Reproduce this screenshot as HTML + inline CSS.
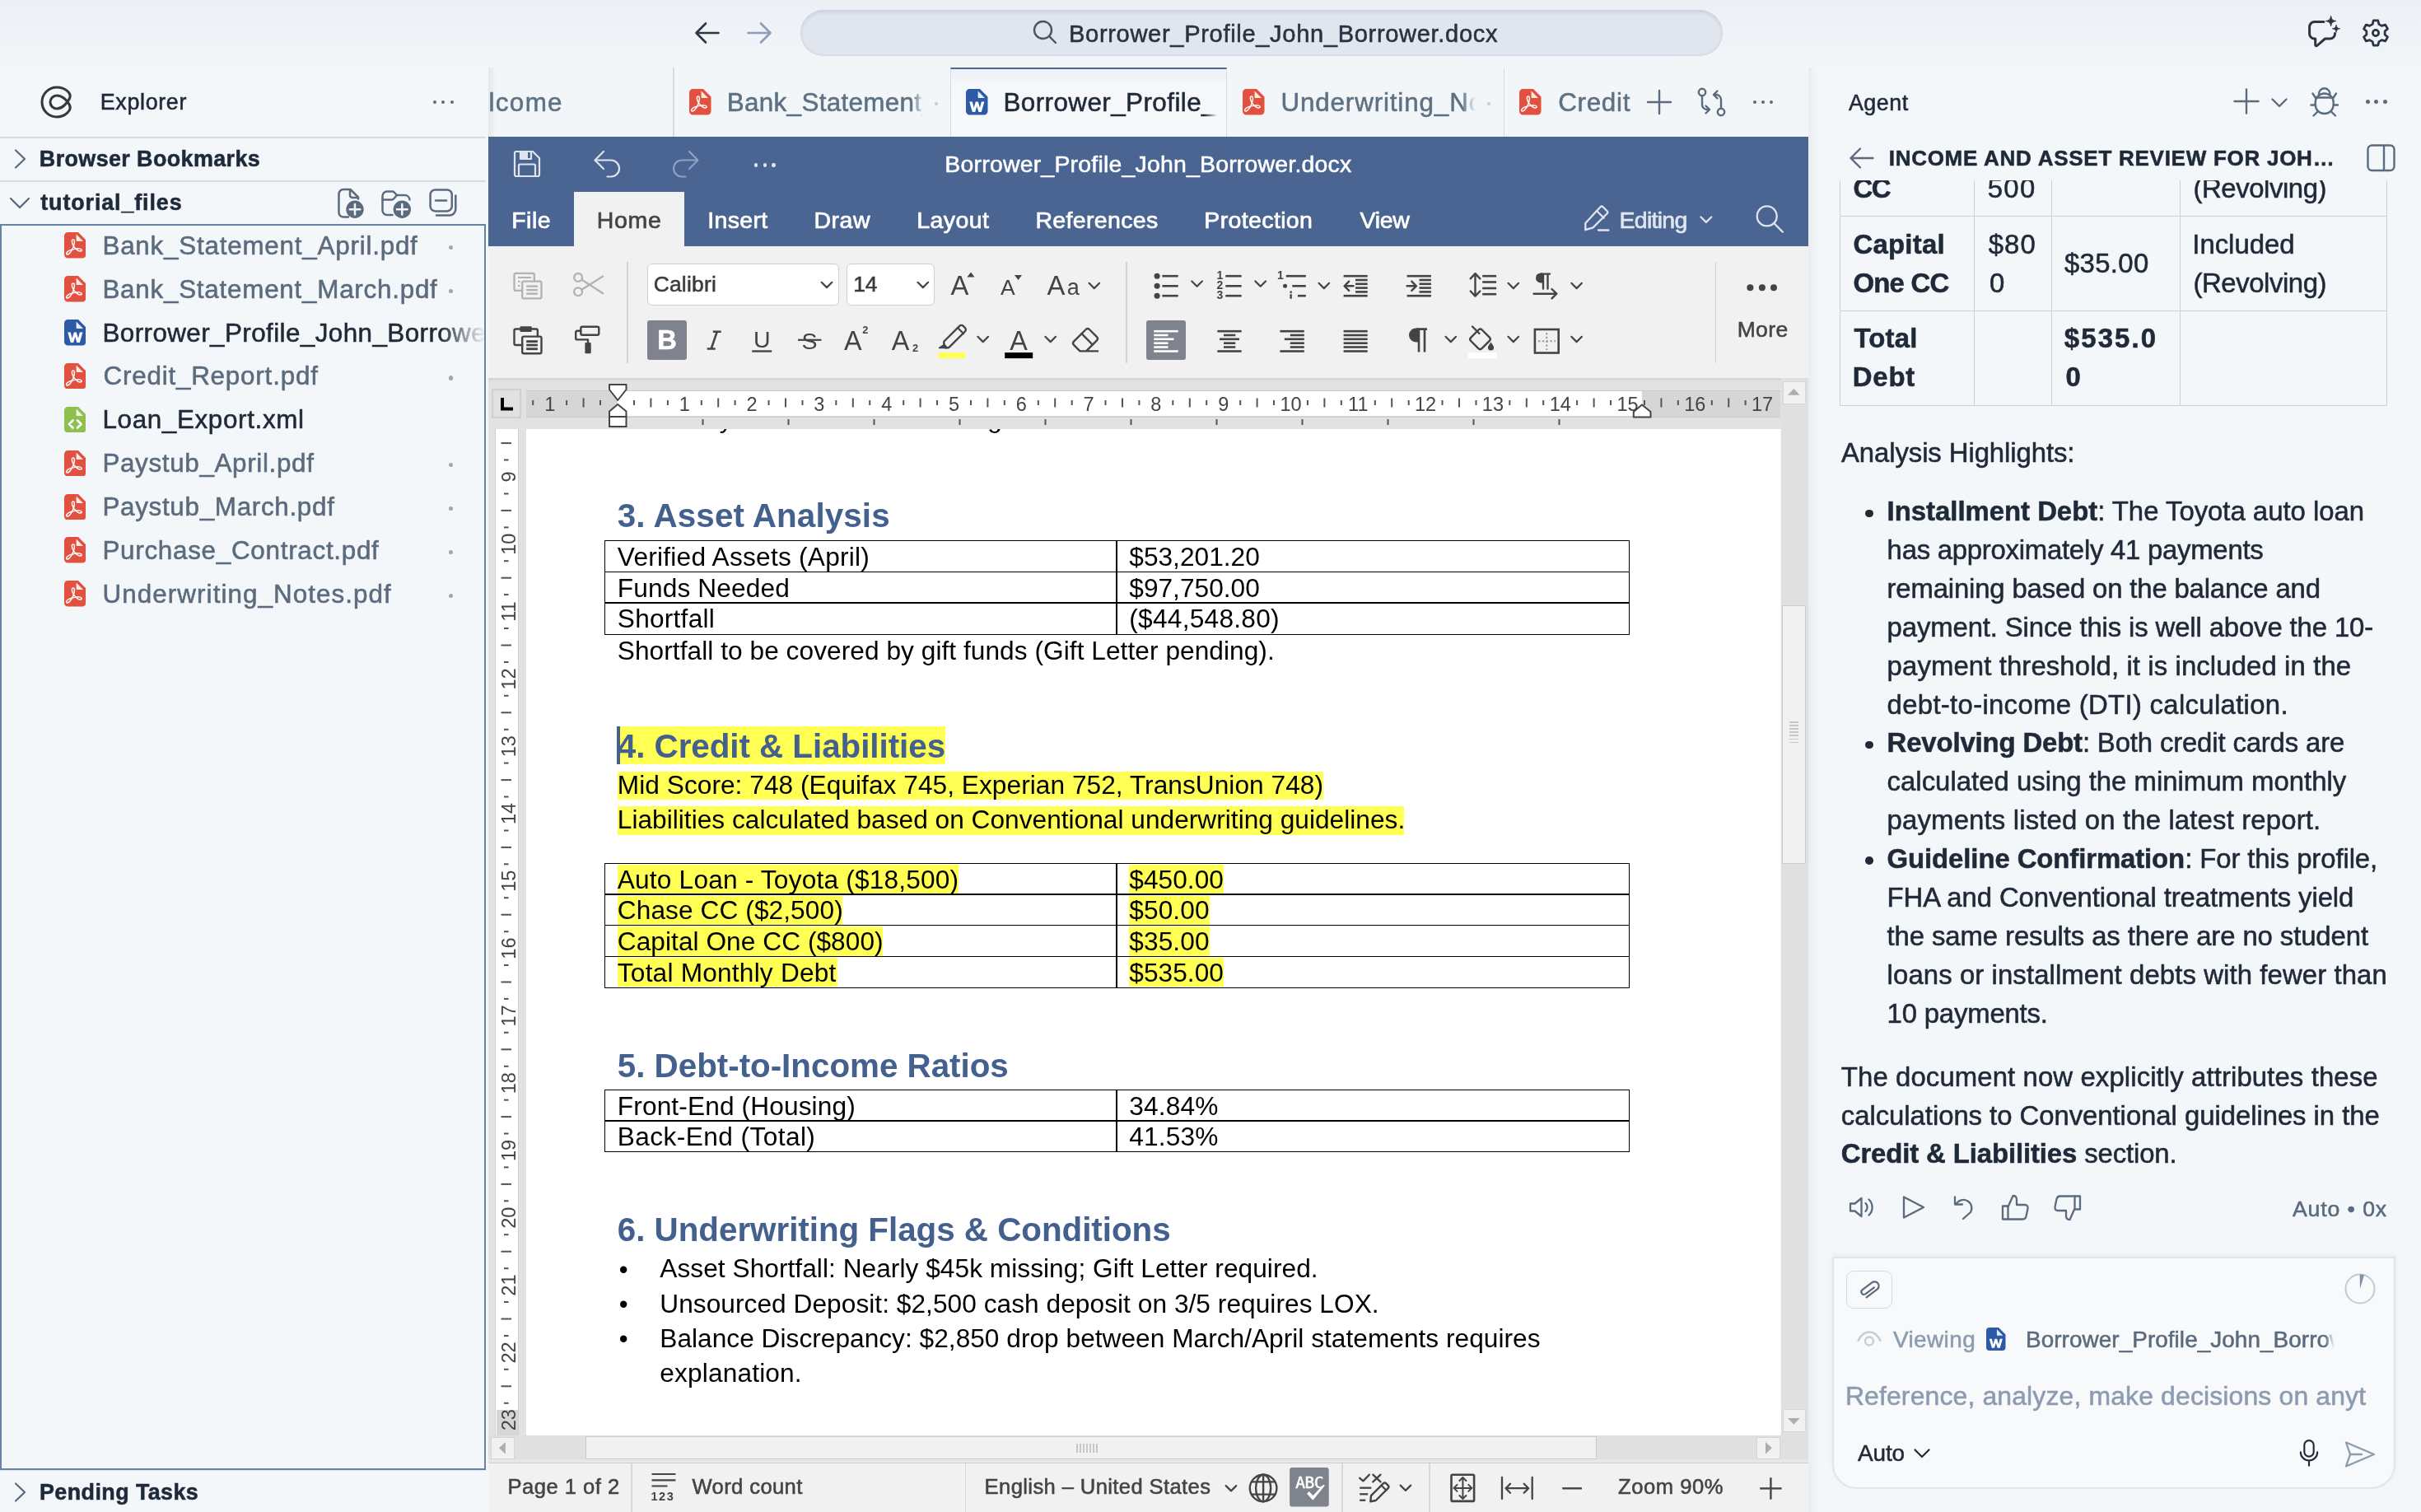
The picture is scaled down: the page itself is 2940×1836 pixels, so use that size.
<!DOCTYPE html><html><head><meta charset="utf-8"><title>Borrower_Profile_John_Borrower.docx</title><style>
html,body{margin:0;padding:0}
body{width:2940px;height:1836px;overflow:hidden;position:relative;background:#f4f7fa;will-change:transform;font-family:"Liberation Sans",sans-serif;}
.a{position:absolute;box-sizing:border-box}
.t{position:absolute;white-space:nowrap;font-family:"Liberation Sans",sans-serif;-webkit-text-stroke:0.55px}
.d{-webkit-text-stroke:0}
</style></head><body>
<div class="a" style="left:0.0px;top:0.0px;width:2940.0px;height:82.0px;background:linear-gradient(#eceff4,#f3f6f9)"></div>
<svg class="a" style="left:842.0px;top:26.0px;" width="34" height="28" viewBox="0 0 34 28" fill="none"><path d="M30.5 14H3.5M15 2.5L3.5 14L15 25.5" stroke="#2b3544" stroke-width="2.6" stroke-linecap="round" stroke-linejoin="round"/></svg>
<svg class="a" style="left:905.0px;top:26.0px;" width="34" height="28" viewBox="0 0 34 28" fill="none"><path d="M3.5 14H30.5M19 2.5L30.5 14L19 25.5" stroke="#8d9db8" stroke-width="2.6" stroke-linecap="round" stroke-linejoin="round"/></svg>
<div class="a" style="left:972.0px;top:12.0px;width:1120.0px;height:56.0px;border-radius:28px;background:#e1e6ee;box-shadow:inset 0 3px 4px rgba(110,125,155,.20),inset 0 -1.500px 2px rgba(110,125,155,.12)"></div>
<svg class="a" style="left:1253.0px;top:23.0px;" width="32" height="32" viewBox="0 0 32 32" fill="none"><circle cx="13.5" cy="13.5" r="10.5" stroke="#4b5563" stroke-width="2.4"/><path d="M21.2 21.2L29 29" stroke="#4b5563" stroke-width="2.4" stroke-linecap="round"/></svg>
<div class="t " style="left:1298.01px;top:22.0px;font-size:29.10px;line-height:38px;color:#283241;letter-spacing:0.661px;">Borrower_Profile_John_Borrower.docx</div>
<svg class="a" style="left:2800.0px;top:14.0px;" width="44" height="46" viewBox="0 0 44 46" fill="none"><path d="M22 12.600H10.600a6 6 0 0 0-6 6V27a6 6 0 0 0 6 6h1.100v7.600a1.200 1.200 0 0 0 2 .9L23.500 33h6a6 6 0 0 0 6-6v-.5" stroke="#2b3544" stroke-width="3" stroke-linejoin="round" stroke-linecap="round"/><path d="M30.600 5.400c.8 4.300 1.900 5.400 6.200 6.200-4.300 .8-5.400 1.900-6.200 6.200-.8-4.300-1.900-5.400-6.200-6.200 4.300-.8 5.400-1.900 6.200-6.200z" fill="#2b3544" stroke="#2b3544" stroke-width="1" stroke-linejoin="round"/><path d="M37 16.200c.6 3.200 1.400 4 4.600 4.600-3.200 .6-4 1.400-4.600 4.600-.6-3.200-1.400-4-4.600-4.600 3.200-.6 4-1.400 4.600-4.600z" fill="#2b3544" stroke="#2b3544" stroke-width=".8" stroke-linejoin="round"/></svg>
<svg class="a" style="left:2866.9px;top:21.8px;" width="36" height="36" viewBox="0 0 36 36" fill="none"><path d="M21.86 7.38 L20.79 2.96 L15.21 2.96 L14.14 7.38 L10.74 9.34 L6.37 8.06 L3.58 12.89 L6.87 16.04 L6.87 19.96 L3.58 23.11 L6.37 27.94 L10.74 26.66 L14.14 28.62 L15.21 33.04 L20.79 33.04 L21.86 28.62 L25.26 26.66 L29.63 27.94 L32.42 23.11 L29.13 19.96 L29.13 16.04 L32.42 12.89 L29.63 8.06 L25.26 9.34Z" stroke="#2b3544" stroke-width="2.800" stroke-linejoin="round"/><circle cx="18" cy="18" r="3.600" stroke="#2b3544" stroke-width="2.800"/></svg>
<svg class="a" style="left:48.0px;top:103.0px;" width="42" height="42" viewBox="0 0 42 42" fill="none"><path d="M36.5 24.500C39.500 31 31 39 21 39A18 18 0 0 1 21 3C31 3 39.500 10 36.500 16.500C33.500 22.500 27.500 29 21 29A8 8 0 0 1 21 13C27.500 13 33.500 18.500 36.500 24.500Z" stroke="#38383b" stroke-width="3.1" stroke-linejoin="round"/></svg>
<div class="t " style="left:121.79px;top:107.0px;font-size:26.90px;line-height:35px;color:#1f2937;letter-spacing:0.637px;">Explorer</div>
<div class="a" style="left:525.5px;top:122.3px;width:4.0px;height:4.0px;border-radius:50%;background:#5b6b7d"></div>
<div class="a" style="left:536.1px;top:122.3px;width:4.0px;height:4.0px;border-radius:50%;background:#5b6b7d"></div>
<div class="a" style="left:546.7px;top:122.3px;width:4.0px;height:4.0px;border-radius:50%;background:#5b6b7d"></div>
<div class="a" style="left:0.0px;top:166.0px;width:590.0px;height:2.0px;background:#d5dde6"></div>
<div class="a" style="left:0.0px;top:219.0px;width:590.0px;height:2.0px;background:#d5dde6"></div>
<svg class="a" style="left:14.0px;top:178.0px;" width="22" height="30" viewBox="0 0 22 30" fill="none"><path d="M5 4.500L16 15L5 25.500" stroke="#5b6b7d" stroke-width="2.3" stroke-linecap="round" stroke-linejoin="round"/></svg>
<div class="t " style="left:47.82px;top:176.0px;font-size:26.90px;line-height:35px;color:#1e2a3a;letter-spacing:0.401px;font-weight:700;">Browser Bookmarks</div>
<svg class="a" style="left:9.0px;top:234.0px;" width="30" height="24" viewBox="0 0 30 24" fill="none"><path d="M4 7L15 18L26 7" stroke="#5b6b7d" stroke-width="2.3" stroke-linecap="round" stroke-linejoin="round"/></svg>
<div class="t " style="left:49.28px;top:229.0px;font-size:26.90px;line-height:35px;color:#1e2a3a;letter-spacing:0.881px;font-weight:700;">tutorial_files</div>
<svg class="a" style="left:408.0px;top:226.0px;" width="38" height="42" viewBox="0 0 38 42" fill="none"><path d="M15 37.500H9a5.500 5.500 0 0 1-5.500-5.500V9.500A5.500 5.500 0 0 1 9 4h8.500l9.500 9.500v2" stroke="#5a6b7e" stroke-width="2.500" stroke-linecap="round" stroke-linejoin="round"/><path d="M17 4.500v6.500a3 3 0 0 0 3 3h6.500" stroke="#5a6b7e" stroke-width="2.500" stroke-linecap="round" stroke-linejoin="round"/><circle cx="23" cy="28.300" r="10.700" fill="#5a6b7e"/><path d="M23 22v12.600M16.700 28.300h12.600" stroke="#f4f7fa" stroke-width="2.500" stroke-linecap="round"/></svg>
<svg class="a" style="left:461.0px;top:226.0px;" width="42" height="42" viewBox="0 0 42 42" fill="none"><path d="M15.500 35H9a5.500 5.500 0 0 1-5.500-5.500V12A5.500 5.500 0 0 1 9 6.500h6.500a3 3 0 0 1 2.200 1l3.300 3.500h9.500a6 6 0 0 1 6 5.500" stroke="#5a6b7e" stroke-width="2.500" stroke-linecap="round" stroke-linejoin="round"/><path d="M3.500 16.500h11.300a3 3 0 0 0 2.200-1l4-4.500" stroke="#5a6b7e" stroke-width="2.500" stroke-linecap="round" stroke-linejoin="round"/><circle cx="27.300" cy="28.300" r="10.700" fill="#5a6b7e"/><path d="M27.300 22v12.600M21 28.300h12.600" stroke="#f4f7fa" stroke-width="2.500" stroke-linecap="round"/></svg>
<svg class="a" style="left:518.0px;top:226.0px;" width="40" height="40" viewBox="0 0 40 40" fill="none"><rect x="4.600" y="4.400" width="26.200" height="26" rx="6" stroke="#5a6b7e" stroke-width="2.500" stroke-linecap="round" stroke-linejoin="round"/><path d="M11 17.500h13" stroke="#5a6b7e" stroke-width="2.500" stroke-linecap="round" stroke-linejoin="round"/><path d="M35.300 11.500V28a7.500 7.500 0 0 1-7.500 7.500H12" stroke="#5a6b7e" stroke-width="2.500" stroke-linecap="round" stroke-linejoin="round"/></svg>
<div class="a" style="left:0.0px;top:272.0px;width:590.0px;height:1512.5px;border:2px solid #6682a4"></div>
<svg class="a" style="left:77.8px;top:282.4px;" width="26.5" height="31.5" viewBox="0 0 26.5 31.5" fill="none"><path d="M4.500 0H17L26.500 9.500V27a4.500 4.500 0 0 1-4.500 4.500H4.500a4.500 4.500 0 0 1-4.500-4.500V4.500a4.500 4.500 0 0 1 4.500-4.500z" fill="#e2503f"/><path d="M14.600 2.600V10a1 1 0 0 0 1 1H23z" fill="#fbe9e6"/><path d="M12 11.500c1.400 0 1.700 2.200.9 5.200-.9 3.300-3.200 7.600-5.200 9.300-1.500 1.300-3.200.9-2.600-.8.700-1.900 5.400-4 9.900-4.400 3-.3 5.800.2 5.800 1.500 0 1.400-2.300 1.300-4.300.1-2.800-1.700-5.200-5.600-5.700-8.400-.3-1.600.3-2.500 1.200-2.500z" stroke="#fff" stroke-width="1.250" fill="none" stroke-linejoin="round" transform="translate(-3.300 -4.600) scale(1.180)"/></svg>
<div class="t " style="left:124.43px;top:278.9px;font-size:31.40px;line-height:40px;color:#5b6b7d;letter-spacing:0.770px;">Bank_Statement_April.pdf</div>
<div class="a" style="left:544.7px;top:297.7px;width:5.4px;height:5.4px;border-radius:50%;background:#9ca7b6"></div>
<svg class="a" style="left:77.8px;top:335.2px;" width="26.5" height="31.5" viewBox="0 0 26.5 31.5" fill="none"><path d="M4.500 0H17L26.500 9.500V27a4.500 4.500 0 0 1-4.500 4.500H4.500a4.500 4.500 0 0 1-4.500-4.500V4.500a4.500 4.500 0 0 1 4.500-4.500z" fill="#e2503f"/><path d="M14.600 2.600V10a1 1 0 0 0 1 1H23z" fill="#fbe9e6"/><path d="M12 11.500c1.400 0 1.700 2.200.9 5.200-.9 3.300-3.200 7.600-5.200 9.300-1.500 1.300-3.200.9-2.600-.8.700-1.900 5.400-4 9.900-4.400 3-.3 5.800.2 5.800 1.500 0 1.400-2.300 1.300-4.300.1-2.800-1.700-5.200-5.600-5.700-8.400-.3-1.600.3-2.500 1.200-2.500z" stroke="#fff" stroke-width="1.250" fill="none" stroke-linejoin="round" transform="translate(-3.300 -4.600) scale(1.180)"/></svg>
<div class="t " style="left:124.43px;top:331.8px;font-size:31.40px;line-height:40px;color:#5b6b7d;letter-spacing:0.751px;">Bank_Statement_March.pdf</div>
<div class="a" style="left:544.7px;top:350.6px;width:5.4px;height:5.4px;border-radius:50%;background:#9ca7b6"></div>
<svg class="a" style="left:77.8px;top:388.1px;" width="26.5" height="31.5" viewBox="0 0 26.5 31.5" fill="none"><path d="M4.500 0H17L26.500 9.500V27a4.500 4.500 0 0 1-4.500 4.500H4.500a4.500 4.500 0 0 1-4.500-4.500V4.500a4.500 4.500 0 0 1 4.500-4.500z" fill="#2d5aa6"/><path d="M14.600 2.600V10a1 1 0 0 0 1 1H23z" fill="#e6eefa"/><path d="M4.200 15.500h3.600l1.800 7.500 2.200-7.500h3l2.200 7.500 1.800-7.500h3.600l-3.600 12.500h-3.400l-2.100-7-2.100 7H7.800z" fill="#fff"/></svg>
<div class="a" style="left:123.0px;top:384.6px;width:467.0px;height:40px;overflow:hidden;-webkit-mask-image:linear-gradient(90deg,#000 88%,transparent 100%);mask-image:linear-gradient(90deg,#000 88%,transparent 100%)"><div class="t" style="left:1.43px;top:0;font-size:31.40px;line-height:40px;color:#1f2937;letter-spacing:0.414px">Borrower_Profile_John_Borrower.docx</div></div>
<svg class="a" style="left:77.8px;top:440.9px;" width="26.5" height="31.5" viewBox="0 0 26.5 31.5" fill="none"><path d="M4.500 0H17L26.500 9.500V27a4.500 4.500 0 0 1-4.500 4.500H4.500a4.500 4.500 0 0 1-4.500-4.500V4.500a4.500 4.500 0 0 1 4.500-4.500z" fill="#e2503f"/><path d="M14.600 2.600V10a1 1 0 0 0 1 1H23z" fill="#fbe9e6"/><path d="M12 11.500c1.400 0 1.700 2.200.9 5.200-.9 3.300-3.200 7.600-5.200 9.300-1.500 1.300-3.200.9-2.600-.8.700-1.900 5.400-4 9.900-4.400 3-.3 5.800.2 5.800 1.500 0 1.400-2.300 1.300-4.300.1-2.800-1.700-5.200-5.600-5.700-8.400-.3-1.600.3-2.500 1.200-2.500z" stroke="#fff" stroke-width="1.250" fill="none" stroke-linejoin="round" transform="translate(-3.300 -4.600) scale(1.180)"/></svg>
<div class="t " style="left:125.43px;top:437.4px;font-size:31.40px;line-height:40px;color:#5b6b7d;letter-spacing:0.792px;">Credit_Report.pdf</div>
<div class="a" style="left:544.7px;top:456.2px;width:5.4px;height:5.4px;border-radius:50%;background:#9ca7b6"></div>
<svg class="a" style="left:77.8px;top:493.8px;" width="26.5" height="31.5" viewBox="0 0 26.5 31.5" fill="none"><path d="M4.500 0H17L26.500 9.500V27a4.500 4.500 0 0 1-4.500 4.500H4.500a4.500 4.500 0 0 1-4.500-4.500V4.500a4.500 4.500 0 0 1 4.500-4.500z" fill="#8fbf4f"/><path d="M14.600 2.600V10a1 1 0 0 0 1 1H23z" fill="#eef7e0"/><path d="M10.500 16.500L6 21l4.500 4.500M16 16.500l4.500 4.500-4.500 4.500" stroke="#fff" stroke-width="2.600" fill="none" stroke-linejoin="round" stroke-linecap="round"/></svg>
<div class="t " style="left:124.43px;top:490.3px;font-size:31.40px;line-height:40px;color:#1f2937;letter-spacing:0.644px;">Loan_Export.xml</div>
<svg class="a" style="left:77.8px;top:546.6px;" width="26.5" height="31.5" viewBox="0 0 26.5 31.5" fill="none"><path d="M4.500 0H17L26.500 9.500V27a4.500 4.500 0 0 1-4.500 4.500H4.500a4.500 4.500 0 0 1-4.500-4.500V4.500a4.500 4.500 0 0 1 4.500-4.500z" fill="#e2503f"/><path d="M14.600 2.600V10a1 1 0 0 0 1 1H23z" fill="#fbe9e6"/><path d="M12 11.500c1.400 0 1.700 2.200.9 5.200-.9 3.300-3.200 7.600-5.200 9.300-1.500 1.300-3.200.9-2.600-.8.700-1.900 5.400-4 9.900-4.400 3-.3 5.800.2 5.800 1.500 0 1.400-2.300 1.300-4.300.1-2.800-1.700-5.200-5.600-5.700-8.400-.3-1.600.3-2.500 1.200-2.500z" stroke="#fff" stroke-width="1.250" fill="none" stroke-linejoin="round" transform="translate(-3.300 -4.600) scale(1.180)"/></svg>
<div class="t " style="left:124.43px;top:543.1px;font-size:31.40px;line-height:40px;color:#5b6b7d;letter-spacing:0.650px;">Paystub_April.pdf</div>
<div class="a" style="left:544.7px;top:561.9px;width:5.4px;height:5.4px;border-radius:50%;background:#9ca7b6"></div>
<svg class="a" style="left:77.8px;top:599.5px;" width="26.5" height="31.5" viewBox="0 0 26.5 31.5" fill="none"><path d="M4.500 0H17L26.500 9.500V27a4.500 4.500 0 0 1-4.500 4.500H4.500a4.500 4.500 0 0 1-4.500-4.500V4.500a4.500 4.500 0 0 1 4.500-4.500z" fill="#e2503f"/><path d="M14.600 2.600V10a1 1 0 0 0 1 1H23z" fill="#fbe9e6"/><path d="M12 11.500c1.400 0 1.700 2.200.9 5.200-.9 3.300-3.200 7.600-5.200 9.300-1.500 1.300-3.200.9-2.600-.8.700-1.900 5.400-4 9.900-4.400 3-.3 5.800.2 5.800 1.500 0 1.400-2.300 1.300-4.300.1-2.800-1.700-5.200-5.600-5.700-8.400-.3-1.600.3-2.500 1.200-2.500z" stroke="#fff" stroke-width="1.250" fill="none" stroke-linejoin="round" transform="translate(-3.300 -4.600) scale(1.180)"/></svg>
<div class="t " style="left:124.43px;top:596.0px;font-size:31.40px;line-height:40px;color:#5b6b7d;letter-spacing:0.686px;">Paystub_March.pdf</div>
<div class="a" style="left:544.7px;top:614.8px;width:5.4px;height:5.4px;border-radius:50%;background:#9ca7b6"></div>
<svg class="a" style="left:77.8px;top:652.3px;" width="26.5" height="31.5" viewBox="0 0 26.5 31.5" fill="none"><path d="M4.500 0H17L26.500 9.500V27a4.500 4.500 0 0 1-4.500 4.500H4.500a4.500 4.500 0 0 1-4.500-4.500V4.500a4.500 4.500 0 0 1 4.500-4.500z" fill="#e2503f"/><path d="M14.600 2.600V10a1 1 0 0 0 1 1H23z" fill="#fbe9e6"/><path d="M12 11.500c1.400 0 1.700 2.200.9 5.200-.9 3.300-3.200 7.600-5.200 9.300-1.500 1.300-3.200.9-2.600-.8.700-1.900 5.400-4 9.900-4.400 3-.3 5.800.2 5.800 1.500 0 1.400-2.300 1.300-4.300.1-2.800-1.700-5.200-5.600-5.700-8.400-.3-1.600.3-2.500 1.200-2.500z" stroke="#fff" stroke-width="1.250" fill="none" stroke-linejoin="round" transform="translate(-3.300 -4.600) scale(1.180)"/></svg>
<div class="t " style="left:124.43px;top:648.8px;font-size:31.40px;line-height:40px;color:#5b6b7d;letter-spacing:0.718px;">Purchase_Contract.pdf</div>
<div class="a" style="left:544.7px;top:667.6px;width:5.4px;height:5.4px;border-radius:50%;background:#9ca7b6"></div>
<svg class="a" style="left:77.8px;top:705.2px;" width="26.5" height="31.5" viewBox="0 0 26.5 31.5" fill="none"><path d="M4.500 0H17L26.500 9.500V27a4.500 4.500 0 0 1-4.500 4.500H4.500a4.500 4.500 0 0 1-4.500-4.500V4.500a4.500 4.500 0 0 1 4.500-4.500z" fill="#e2503f"/><path d="M14.600 2.600V10a1 1 0 0 0 1 1H23z" fill="#fbe9e6"/><path d="M12 11.500c1.400 0 1.700 2.200.9 5.200-.9 3.300-3.200 7.600-5.200 9.300-1.500 1.300-3.200.9-2.600-.8.700-1.900 5.400-4 9.900-4.400 3-.3 5.800.2 5.800 1.500 0 1.400-2.300 1.300-4.300.1-2.800-1.700-5.200-5.600-5.700-8.400-.3-1.600.3-2.500 1.200-2.500z" stroke="#fff" stroke-width="1.250" fill="none" stroke-linejoin="round" transform="translate(-3.300 -4.600) scale(1.180)"/></svg>
<div class="t " style="left:124.58px;top:701.7px;font-size:31.40px;line-height:40px;color:#5b6b7d;letter-spacing:1.058px;">Underwriting_Notes.pdf</div>
<div class="a" style="left:544.7px;top:720.5px;width:5.4px;height:5.4px;border-radius:50%;background:#9ca7b6"></div>
<svg class="a" style="left:14.0px;top:1797.0px;" width="22" height="30" viewBox="0 0 22 30" fill="none"><path d="M5 4.500L16 15L5 25.500" stroke="#5b6b7d" stroke-width="2.300" stroke-linecap="round" stroke-linejoin="round"/></svg>
<div class="t " style="left:48.02px;top:1794.8px;font-size:26.90px;line-height:35px;color:#1e2a3a;letter-spacing:0.417px;font-weight:700;">Pending Tasks</div>
<div class="a" style="left:0.0px;top:1784.5px;width:590.0px;height:1.5px;background:#dfe5ec"></div>
<div class="a" style="left:593.0px;top:82.0px;width:1603.0px;height:84.0px;background:#f3f6f9"></div>
<div class="a" style="left:593.0px;top:82.0px;width:10.0px;height:84.0px;background:linear-gradient(90deg,rgba(150,160,180,.16),rgba(150,160,180,0))"></div>
<div class="t " style="left:593.50px;top:104.5px;font-size:31.40px;line-height:40px;color:#5d7183;letter-spacing:1.335px;">lcome</div>
<div class="a" style="left:817.0px;top:82.0px;width:1.6px;height:84.0px;background:#d3dbe5"></div>
<div class="a" style="left:1825.5px;top:82.0px;width:1.6px;height:84.0px;background:#d3dbe5"></div>
<div class="a" style="left:1153.5px;top:82.0px;width:336.0px;height:84.0px;background:linear-gradient(#eef1f5 0,#f5f7fa 22%,#f8f9fb);border-left:1.6px solid #d3dbe5;border-right:1.6px solid #d3dbe5;border-top:2.5px solid #4a6a96"></div>
<svg class="a" style="left:837.0px;top:108.4px;" width="26.5" height="31.5" viewBox="0 0 26.5 31.5" fill="none"><path d="M4.500 0H17L26.500 9.500V27a4.500 4.500 0 0 1-4.500 4.500H4.500a4.500 4.500 0 0 1-4.500-4.500V4.500a4.500 4.500 0 0 1 4.500-4.500z" fill="#e2503f"/><path d="M14.600 2.600V10a1 1 0 0 0 1 1H23z" fill="#fbe9e6"/><path d="M12 11.500c1.400 0 1.700 2.200.9 5.200-.9 3.300-3.200 7.600-5.200 9.300-1.500 1.300-3.200.9-2.600-.8.700-1.900 5.400-4 9.900-4.400 3-.3 5.800.2 5.800 1.500 0 1.400-2.300 1.300-4.300.1-2.800-1.700-5.200-5.600-5.700-8.400-.3-1.600.3-2.500 1.200-2.500z" stroke="#fff" stroke-width="1.250" fill="none" stroke-linejoin="round" transform="translate(-3.300 -4.600) scale(1.180)"/></svg>
<div class="a" style="left:881.3px;top:104.5px;width:240.0px;height:40px;overflow:hidden;-webkit-mask-image:linear-gradient(90deg,#000 95%,transparent 100%);mask-image:linear-gradient(90deg,#000 95%,transparent 100%)"><div class="t" style="left:1.43px;top:0;font-size:31.40px;line-height:40px;color:#5d7183;letter-spacing:0.333px">Bank_Statement_April.pdf</div></div>
<div class="a" style="left:1134.5px;top:123.5px;width:4.0px;height:4.0px;border-radius:50%;background:#c3cbd5"></div>
<svg class="a" style="left:1173.0px;top:108.4px;" width="26.5" height="31.5" viewBox="0 0 26.5 31.5" fill="none"><path d="M4.500 0H17L26.500 9.500V27a4.500 4.500 0 0 1-4.500 4.500H4.500a4.500 4.500 0 0 1-4.500-4.500V4.500a4.500 4.500 0 0 1 4.500-4.500z" fill="#2d5aa6"/><path d="M14.600 2.600V10a1 1 0 0 0 1 1H23z" fill="#e6eefa"/><path d="M4.200 15.500h3.600l1.800 7.500 2.200-7.500h3l2.200 7.500 1.800-7.500h3.600l-3.600 12.500h-3.400l-2.100-7-2.100 7H7.800z" fill="#fff"/></svg>
<div class="a" style="left:1217.0px;top:104.5px;width:261.0px;height:40px;overflow:hidden;-webkit-mask-image:linear-gradient(90deg,#000 94%,transparent 100%);mask-image:linear-gradient(90deg,#000 94%,transparent 100%)"><div class="t" style="left:1.43px;top:0;font-size:31.40px;line-height:40px;color:#1f2937;letter-spacing:0.431px">Borrower_Profile_John_Borrower.docx</div></div>
<svg class="a" style="left:1509.0px;top:108.4px;" width="26.5" height="31.5" viewBox="0 0 26.5 31.5" fill="none"><path d="M4.500 0H17L26.500 9.500V27a4.500 4.500 0 0 1-4.500 4.500H4.500a4.500 4.500 0 0 1-4.500-4.500V4.500a4.500 4.500 0 0 1 4.500-4.500z" fill="#e2503f"/><path d="M14.600 2.600V10a1 1 0 0 0 1 1H23z" fill="#fbe9e6"/><path d="M12 11.500c1.400 0 1.700 2.200.9 5.200-.9 3.300-3.200 7.600-5.200 9.300-1.500 1.300-3.200.9-2.600-.8.700-1.900 5.400-4 9.900-4.400 3-.3 5.800.2 5.800 1.500 0 1.400-2.300 1.300-4.300.1-2.800-1.700-5.200-5.600-5.700-8.400-.3-1.600.3-2.500 1.200-2.500z" stroke="#fff" stroke-width="1.250" fill="none" stroke-linejoin="round" transform="translate(-3.300 -4.600) scale(1.180)"/></svg>
<div class="a" style="left:1553.8px;top:104.5px;width:238.5px;height:40px;overflow:hidden;-webkit-mask-image:linear-gradient(90deg,#000 93%,transparent 100%);mask-image:linear-gradient(90deg,#000 93%,transparent 100%)"><div class="t" style="left:1.58px;top:0;font-size:31.40px;line-height:40px;color:#5d7183;letter-spacing:0.853px">Underwriting_Notes.pdf</div></div>
<div class="a" style="left:1806.0px;top:123.5px;width:4.0px;height:4.0px;border-radius:50%;background:#c3cbd5"></div>
<svg class="a" style="left:1845.0px;top:108.4px;" width="26.5" height="31.5" viewBox="0 0 26.5 31.5" fill="none"><path d="M4.500 0H17L26.500 9.500V27a4.500 4.500 0 0 1-4.500 4.500H4.500a4.500 4.500 0 0 1-4.500-4.500V4.500a4.500 4.500 0 0 1 4.500-4.500z" fill="#e2503f"/><path d="M14.600 2.600V10a1 1 0 0 0 1 1H23z" fill="#fbe9e6"/><path d="M12 11.500c1.400 0 1.700 2.200.9 5.200-.9 3.300-3.200 7.600-5.200 9.300-1.500 1.300-3.200.9-2.600-.8.700-1.900 5.400-4 9.900-4.400 3-.3 5.800.2 5.800 1.500 0 1.400-2.300 1.300-4.300.1-2.800-1.700-5.200-5.600-5.700-8.400-.3-1.600.3-2.500 1.200-2.500z" stroke="#fff" stroke-width="1.250" fill="none" stroke-linejoin="round" transform="translate(-3.300 -4.600) scale(1.180)"/></svg>
<div class="t " style="left:1892.23px;top:104.5px;font-size:31.40px;line-height:40px;color:#5d7183;letter-spacing:0.683px;">Credit</div>
<svg class="a" style="left:1998.0px;top:107.0px;" width="34" height="34" viewBox="0 0 34 34" fill="none"><path d="M17 3V31M3 17H31" stroke="#5b6b7d" stroke-width="2.400" stroke-linecap="round"/></svg>
<svg class="a" style="left:2060.0px;top:105.0px;" width="38" height="38" viewBox="0 0 38 38" fill="none"><circle cx="7" cy="7" r="4.200" stroke="#5b6b7d" stroke-width="2.400" stroke-linecap="round" stroke-linejoin="round"/><circle cx="30" cy="31" r="4.200" stroke="#5b6b7d" stroke-width="2.400" stroke-linecap="round" stroke-linejoin="round"/><path d="M7 11.500V22a6 6 0 0 0 6 6h3M11.500 23.500L16 28l-4.500 4.500" stroke="#5b6b7d" stroke-width="2.400" stroke-linecap="round" stroke-linejoin="round"/><path d="M30 26.500V16a6 6 0 0 0-6-6h-3M25.500 14.500L21 10l4.500-4.500" stroke="#5b6b7d" stroke-width="2.400" stroke-linecap="round" stroke-linejoin="round"/></svg>
<div class="a" style="left:2128.5px;top:122.0px;width:4.0px;height:4.0px;border-radius:50%;background:#5b6b7d"></div>
<div class="a" style="left:2138.9px;top:122.0px;width:4.0px;height:4.0px;border-radius:50%;background:#5b6b7d"></div>
<div class="a" style="left:2149.3px;top:122.0px;width:4.0px;height:4.0px;border-radius:50%;background:#5b6b7d"></div>
<div class="a" style="left:593.0px;top:166.0px;width:1603.0px;height:133.0px;background:#4a6592"></div>
<svg class="a" style="left:623.0px;top:182.0px;" width="34" height="34" viewBox="0 0 34 34" fill="none"><path d="M2 4a2 2 0 0 1 2-2h20l8 8v20a2 2 0 0 1-2 2H4a2 2 0 0 1-2-2z" stroke="#dfe4ee" stroke-width="2.200" stroke-linejoin="round" stroke-linecap="round"/><path d="M7 32V19a1.500 1.500 0 0 1 1.500-1.500h17A1.500 1.500 0 0 1 27 19v13" stroke="#dfe4ee" stroke-width="2.200" stroke-linejoin="round" stroke-linecap="round"/><path d="M9 2v9h13V2" stroke="#dfe4ee" stroke-width="2.200" stroke-linejoin="round" stroke-linecap="round"/><path d="M9.500 2.500h8.500v8H9.500z" fill="#dfe4ee"/></svg>
<svg class="a" style="left:720.0px;top:182.0px;" width="36" height="34" viewBox="0 0 36 34" fill="none"><path d="M13 2L2.500 12.500 13 23" stroke="#dfe4ee" stroke-width="2.200" stroke-linejoin="round" stroke-linecap="round"/><path d="M3.500 12.500H22a10 10 0 0 1 0 20h-4.500" stroke="#dfe4ee" stroke-width="2.200" stroke-linejoin="round" stroke-linecap="round"/></svg>
<svg class="a" style="left:814.0px;top:182.0px;" width="36" height="34" viewBox="0 0 36 34" fill="none"><path d="M23 2L33.500 12.500 23 23" stroke="#8fa1c2" stroke-width="2.200" stroke-linejoin="round" stroke-linecap="round"/><path d="M32.500 12.500H14a10 10 0 0 0 0 20h4.500" stroke="#8fa1c2" stroke-width="2.200" stroke-linejoin="round" stroke-linecap="round"/></svg>
<div class="a" style="left:916.0px;top:198.3px;width:4.4px;height:4.4px;border-radius:50%;background:#dfe4ee"></div>
<div class="a" style="left:926.6px;top:198.3px;width:4.4px;height:4.4px;border-radius:50%;background:#dfe4ee"></div>
<div class="a" style="left:937.2px;top:198.3px;width:4.4px;height:4.4px;border-radius:50%;background:#dfe4ee"></div>
<div class="t " style="left:1147.37px;top:180.3px;font-size:28.40px;line-height:38px;color:#fff;letter-spacing:0.230px;-webkit-text-stroke:0.55px;">Borrower_Profile_John_Borrower.docx</div>
<div class="a" style="left:697.0px;top:232.5px;width:134.0px;height:67.0px;background:#f1f1f1"></div>
<div class="t " style="left:621.16px;top:248.1px;font-size:28.50px;line-height:38px;color:#fff;letter-spacing:0.492px;-webkit-text-stroke:0.7px;">File</div>
<div class="t " style="left:724.86px;top:248.1px;font-size:28.50px;line-height:38px;color:#444;letter-spacing:0.660px;-webkit-text-stroke:0.7px;">Home</div>
<div class="t " style="left:859.28px;top:248.1px;font-size:28.50px;line-height:38px;color:#fff;letter-spacing:0.349px;-webkit-text-stroke:0.7px;">Insert</div>
<div class="t " style="left:988.56px;top:248.1px;font-size:28.50px;line-height:38px;color:#fff;letter-spacing:0.487px;-webkit-text-stroke:0.7px;">Draw</div>
<div class="t " style="left:1113.16px;top:248.1px;font-size:28.50px;line-height:38px;color:#fff;letter-spacing:0.450px;-webkit-text-stroke:0.7px;">Layout</div>
<div class="t " style="left:1257.46px;top:248.1px;font-size:28.50px;line-height:38px;color:#fff;letter-spacing:0.335px;-webkit-text-stroke:0.7px;">References</div>
<div class="t " style="left:1462.36px;top:248.1px;font-size:28.50px;line-height:38px;color:#fff;letter-spacing:0.362px;-webkit-text-stroke:0.7px;">Protection</div>
<div class="t " style="left:1651.59px;top:248.1px;font-size:28.50px;line-height:38px;color:#fff;letter-spacing:-0.306px;-webkit-text-stroke:0.7px;">View</div>
<svg class="a" style="left:1922.0px;top:247.0px;" width="36" height="36" viewBox="0 0 36 36" fill="none"><path d="M21.500 4.200a2.200 2.200 0 0 1 3.100 0l5 5a2.200 2.200 0 0 1 0 3.100L12.500 29.400 3.300 32.200V24z" stroke="#dfe4ee" stroke-width="2.300" stroke-linejoin="round" stroke-linecap="round"/><path d="M17.500 9.500l8.200 8.200" stroke="#dfe4ee" stroke-width="2.300" stroke-linejoin="round" stroke-linecap="round"/><path d="M19 32.500h12.500" stroke="#dfe4ee" stroke-width="2.300" stroke-linejoin="round" stroke-linecap="round"/></svg>
<div class="t " style="left:1966.46px;top:247.7px;font-size:28.50px;line-height:38px;color:#e1e6ef;letter-spacing:-0.711px;-webkit-text-stroke:0.6px;">Editing</div>
<svg class="a" style="left:2062.0px;top:260.0px;" width="20" height="14" viewBox="0 0 20 14" fill="none"><path d="M3.500 3.500l6.400 6.400 6.400-6.400" stroke="#dfe4ee" stroke-width="2.300" stroke-linejoin="round" stroke-linecap="round"/></svg>
<svg class="a" style="left:2130.0px;top:247.0px;" width="38" height="38" viewBox="0 0 38 38" fill="none"><circle cx="15.700" cy="15.400" r="12" stroke="#dfe4ee" stroke-width="2.300" stroke-linejoin="round" stroke-linecap="round"/><path d="M24.500 24.200L34.800 34.600" stroke="#dfe4ee" stroke-width="2.300" stroke-linejoin="round" stroke-linecap="round"/></svg>
<div class="a" style="left:593.0px;top:298.6px;width:1603.0px;height:161.0px;background:#f1f1f1"></div>
<div class="a" style="left:593.0px;top:459.0px;width:1603.0px;height:62.0px;background:#e2e2e2"></div>
<div class="a" style="left:593.0px;top:459.0px;width:1603.0px;height:5.0px;background:linear-gradient(#d2d2d2,#e2e2e2)"></div>
<div class="a" style="left:761.0px;top:318.0px;width:1.5px;height:123.0px;background:#d4d4d4"></div>
<div class="a" style="left:1367.0px;top:318.0px;width:1.5px;height:123.0px;background:#d4d4d4"></div>
<div class="a" style="left:2082.5px;top:318.0px;width:1.5px;height:123.0px;background:#d4d4d4"></div>
<svg class="a" style="left:593px;top:298px" width="1603" height="162" viewBox="593 298 1603 162"><path d="M634.200 352.900H626.500a2 2 0 0 1-2-2V333.800a2 2 0 0 1 2-2H646.800a2 2 0 0 1 2 2V341.500" stroke="#b2b2b2" stroke-width="2.3" fill="none" stroke-linejoin="round" stroke-linecap="round"/><rect x="634.200" y="341.700" width="23.300" height="20.700" rx="2" stroke="#b2b2b2" stroke-width="2.300" fill="none"/><path d="M639.2 347.6H652.9" stroke="#b2b2b2" stroke-width="2.4"/><path d="M639.2 352.1H652.9" stroke="#b2b2b2" stroke-width="2.4"/><path d="M639.2 356.7H652.9" stroke="#b2b2b2" stroke-width="2.4"/><path d="M629.0 337.0H645.0" stroke="#b2b2b2" stroke-width="2.0"/><path d="M629.0 342.0H631.5" stroke="#b2b2b2" stroke-width="2.0"/><path d="M629.0 347.0H631.5" stroke="#b2b2b2" stroke-width="2.0"/><circle cx="702.100" cy="336.900" r="4.900" stroke="#b2b2b2" stroke-width="2.300" fill="none"/><circle cx="702.100" cy="354.300" r="4.900" stroke="#b2b2b2" stroke-width="2.300" fill="none"/><path d="M706.300 339.500L732.200 356.200M706.300 351.700L732.200 335.600" stroke="#b2b2b2" stroke-width="2.3" fill="none" stroke-linejoin="round" stroke-linecap="round"/><path d="M634.200 419H626.500a2 2 0 0 1-2-2V401.500a2 2 0 0 1 2-2H631M646 399.500h4.900a2 2 0 0 1 2 2V408" stroke="#444" stroke-width="2.4" fill="none" stroke-linejoin="round" stroke-linecap="round"/><rect x="631.400" y="396.200" width="14.400" height="6.700" rx="1.200" fill="#444"/><rect x="634.200" y="408.600" width="23.300" height="20.700" rx="2" stroke="#444" stroke-width="2.400" fill="none"/><path d="M639.2 414.6H652.9" stroke="#444" stroke-width="2.8"/><path d="M639.2 419.0H652.9" stroke="#444" stroke-width="2.8"/><path d="M639.2 423.7H652.9" stroke="#444" stroke-width="2.8"/><rect x="705.300" y="396.700" width="22" height="10" rx="2" stroke="#444" stroke-width="2.400" fill="none"/><path d="M705.300 401.700H701.200a2 2 0 0 0-2 2V410.400a2 2 0 0 0 2 2H714V416" stroke="#444" stroke-width="2.4" fill="none" stroke-linejoin="round" stroke-linecap="round"/><rect x="710.400" y="416" width="7.300" height="13.300" rx="1" fill="#444"/><text x="1154.5" y="357.9" font-size="32.8" fill="#444" font-weight="400" text-anchor="start" font-family="Liberation Sans,sans-serif" >A</text><path d="M1174.400 336.400L1179 330.600 1183.500 336.400z" fill="#444"/><text x="1215.0" y="357.9" font-size="26.5" fill="#444" font-weight="400" text-anchor="start" font-family="Liberation Sans,sans-serif" >A</text><path d="M1231.900 333.900H1241L1236.500 340z" fill="#444"/><text x="1271.5" y="357.9" font-size="32.8" fill="#444" font-weight="400" text-anchor="start" font-family="Liberation Sans,sans-serif" >A</text><text x="1295.7" y="357.9" font-size="27.0" fill="#444" font-weight="400" text-anchor="start" font-family="Liberation Sans,sans-serif" >a</text><path d="M1322.5 343.8l6.300 6.300 6.300-6.300" stroke="#444" stroke-width="2.200" fill="none" stroke-linecap="round" stroke-linejoin="round"/><circle cx="1405.100" cy="335.2" r="3.500" fill="#444"/><path d="M1411.4 335.2H1430.7" stroke="#444" stroke-width="2.6"/><path d="M1488.3 335.2H1507.6" stroke="#444" stroke-width="2.6"/><circle cx="1405.100" cy="347.3" r="3.500" fill="#444"/><path d="M1411.4 347.3H1430.7" stroke="#444" stroke-width="2.6"/><path d="M1488.3 347.3H1507.6" stroke="#444" stroke-width="2.6"/><circle cx="1405.100" cy="359.2" r="3.500" fill="#444"/><path d="M1411.4 359.2H1430.7" stroke="#444" stroke-width="2.6"/><path d="M1488.3 359.2H1507.6" stroke="#444" stroke-width="2.6"/><text x="1477.6" y="339.3" font-size="14.0" fill="#444" font-weight="700" text-anchor="start" font-family="Liberation Sans,sans-serif" >1</text><text x="1477.6" y="351.0" font-size="14.0" fill="#444" font-weight="700" text-anchor="start" font-family="Liberation Sans,sans-serif" >2</text><text x="1477.6" y="363.0" font-size="14.0" fill="#444" font-weight="700" text-anchor="start" font-family="Liberation Sans,sans-serif" >3</text><path d="M1447.3 341.5l6.300 6.300 6.300-6.300" stroke="#444" stroke-width="2.200" fill="none" stroke-linecap="round" stroke-linejoin="round"/><path d="M1524.4 341.5l6.300 6.300 6.300-6.300" stroke="#444" stroke-width="2.200" fill="none" stroke-linecap="round" stroke-linejoin="round"/><path d="M1601.5 343.8l6.300 6.300 6.300-6.300" stroke="#444" stroke-width="2.200" fill="none" stroke-linecap="round" stroke-linejoin="round"/><text x="1551.0" y="339.3" font-size="14.0" fill="#444" font-weight="700" text-anchor="start" font-family="Liberation Sans,sans-serif" >1</text><path d="M1561.8 335.2H1585.8" stroke="#444" stroke-width="2.6"/><circle cx="1560.500" cy="347.300" r="2.500" fill="#444"/><path d="M1569.3 347.3H1585.8" stroke="#444" stroke-width="2.6"/><rect x="1566.400" y="353.500" width="2.400" height="2.400" fill="#444"/><rect x="1566.400" y="357.200" width="2.400" height="5.500" fill="#444"/><path d="M1575.9 359.2H1585.8" stroke="#444" stroke-width="2.6"/><path d="M1631.6 335.2H1660.7" stroke="#444" stroke-width="2.6"/><path d="M1708.6 335.2H1737.9" stroke="#444" stroke-width="2.6"/><path d="M1646.0 340.0H1660.7" stroke="#444" stroke-width="2.6"/><path d="M1723.5 340.0H1737.9" stroke="#444" stroke-width="2.6"/><path d="M1646.0 344.8H1660.7" stroke="#444" stroke-width="2.6"/><path d="M1723.5 344.8H1737.9" stroke="#444" stroke-width="2.6"/><path d="M1646.0 349.6H1660.7" stroke="#444" stroke-width="2.6"/><path d="M1723.5 349.6H1737.9" stroke="#444" stroke-width="2.6"/><path d="M1646.0 354.4H1660.7" stroke="#444" stroke-width="2.6"/><path d="M1723.5 354.4H1737.9" stroke="#444" stroke-width="2.6"/><path d="M1631.6 359.2H1660.7" stroke="#444" stroke-width="2.6"/><path d="M1708.6 359.2H1737.9" stroke="#444" stroke-width="2.6"/><path d="M1643.500 347.300H1633M1638.200 341.700L1632.600 347.300 1638.200 352.900" stroke="#444" stroke-width="2.4" fill="none" stroke-linejoin="round" stroke-linecap="round"/><path d="M1708.600 347.300H1719.500M1714.300 341.700L1719.900 347.300 1714.300 352.900" stroke="#444" stroke-width="2.4" fill="none" stroke-linejoin="round" stroke-linecap="round"/><path d="M1791.500 332.500V359.300M1785.700 338.300L1791.500 332.200 1797.300 338.300M1785.700 353.500L1791.500 359.600 1797.300 353.500" stroke="#444" stroke-width="2.4" fill="none" stroke-linejoin="round" stroke-linecap="round"/><path d="M1800.2 335.2H1817.1" stroke="#444" stroke-width="2.6"/><path d="M1800.2 342.5H1817.1" stroke="#444" stroke-width="2.6"/><path d="M1800.2 350.0H1817.1" stroke="#444" stroke-width="2.6"/><path d="M1800.2 357.2H1817.1" stroke="#444" stroke-width="2.6"/><path d="M1831.5 343.8l6.300 6.300 6.300-6.300" stroke="#444" stroke-width="2.200" fill="none" stroke-linecap="round" stroke-linejoin="round"/><path d="M1874 350.500V332.600M1879.500 350.500V332.600M1882 332.600H1871.500" stroke="#444" stroke-width="2.4" fill="none" stroke-linejoin="round" stroke-linecap="round"/><path d="M1873 331.400h-2a6 6 0 0 0 0 12h2z" fill="#444"/><path d="M1862.600 356.700H1890M1884.500 351L1890.300 356.700 1884.500 362.400" stroke="#444" stroke-width="2.4" fill="none" stroke-linejoin="round" stroke-linecap="round"/><path d="M1908.3 343.8l6.300 6.300 6.300-6.300" stroke="#444" stroke-width="2.200" fill="none" stroke-linecap="round" stroke-linejoin="round"/><circle cx="2125.4" cy="349.300" r="4" fill="#444"/><circle cx="2139.9" cy="349.300" r="4" fill="#444"/><circle cx="2154.0" cy="349.300" r="4" fill="#444"/><text x="925.2" y="421.5" font-size="28.5" fill="#444" font-weight="400" text-anchor="middle" font-family="Liberation Sans,sans-serif" >U</text><path d="M913.2 426.5H937.2" stroke="#444" stroke-width="2.4"/><text x="983.0" y="423.5" font-size="28.5" fill="#444" font-weight="400" text-anchor="middle" font-family="Liberation Sans,sans-serif" >S</text><path d="M969.0 412.8H997.5" stroke="#444" stroke-width="2.2"/><text x="1025.0" y="424.8" font-size="32.3" fill="#444" font-weight="400" text-anchor="start" font-family="Liberation Sans,sans-serif" >A</text><text x="1047.3" y="405.3" font-size="12.8" fill="#444" font-weight="700" text-anchor="start" font-family="Liberation Sans,sans-serif" >2</text><text x="1082.7" y="424.8" font-size="32.3" fill="#444" font-weight="400" text-anchor="start" font-family="Liberation Sans,sans-serif" >A</text><text x="1108.0" y="427.3" font-size="12.8" fill="#444" font-weight="700" text-anchor="start" font-family="Liberation Sans,sans-serif" >2</text><path d="M870.800 402.700L863.700 423.500M865.800 402.700H875.700M858.700 423.500H868.700" stroke="#444" stroke-width="2.6" fill="none" stroke-linejoin="round" stroke-linecap="butt"/><path d="M1146.500 414.500L1165.200 395.800a3.200 3.200 0 0 1 4.500 0l2.200 2.200a3.200 3.200 0 0 1 0 4.500L1153.200 421.200a4 4 0 0 1-2.800 1.200h-2.500l-1.500-1.600v-3.500a4 4 0 0 1 .1-2.800z" stroke="#444" stroke-width="2.4" fill="none" stroke-linejoin="round" stroke-linecap="round"/><path d="M1163 398l7.200 7.200" stroke="#444" stroke-width="2.2" fill="none" stroke-linejoin="round" stroke-linecap="round"/><path d="M1146.800 418.300L1140.500 422.400 1150.500 422.400z" fill="#444" stroke="#444" stroke-width="1.500" stroke-linejoin="round"/><rect x="1139.200" y="428.100" width="33" height="7" fill="#ffff55"/><path d="M1187.4 408.8l6.300 6.300 6.300-6.300" stroke="#444" stroke-width="2.200" fill="none" stroke-linecap="round" stroke-linejoin="round"/><text x="1237.0" y="424.8" font-size="32.3" fill="#444" font-weight="400" text-anchor="middle" font-family="Liberation Sans,sans-serif" >A</text><rect x="1220.200" y="428.100" width="34" height="7" fill="#000"/><path d="M1269.4 408.8l6.300 6.300 6.300-6.300" stroke="#444" stroke-width="2.200" fill="none" stroke-linecap="round" stroke-linejoin="round"/><path d="M1321.500 426.400H1311.500L1304 418.900a3 3 0 0 1 0-4.200L1318.700 400a3 3 0 0 1 4.200 0L1332 409.100a3 3 0 0 1 0 4.200L1319 426.400H1333" stroke="#444" stroke-width="2.4" fill="none" stroke-linejoin="round" stroke-linecap="round"/><path d="M1313.500 405.200L1326.800 418.500" stroke="#444" stroke-width="2.4" fill="none" stroke-linejoin="round" stroke-linecap="round"/><rect x="1392" y="389" width="48" height="48" rx="3" fill="#7e838d"/><path d="M1401.2 402.2H1430.7" stroke="#fff" stroke-width="2.6"/><path d="M1478.3 402.2H1507.6" stroke="#444" stroke-width="2.6"/><path d="M1554.4 402.2H1583.8" stroke="#444" stroke-width="2.6"/><path d="M1631.6 402.2H1660.7" stroke="#444" stroke-width="2.6"/><path d="M1401.2 407.0H1418.5" stroke="#fff" stroke-width="2.6"/><path d="M1486.0 407.0H1500.3" stroke="#444" stroke-width="2.6"/><path d="M1566.8 407.0H1583.8" stroke="#444" stroke-width="2.6"/><path d="M1631.6 407.0H1660.7" stroke="#444" stroke-width="2.6"/><path d="M1401.2 411.8H1425.5" stroke="#fff" stroke-width="2.6"/><path d="M1481.0 411.8H1505.0" stroke="#444" stroke-width="2.6"/><path d="M1559.8 411.8H1583.8" stroke="#444" stroke-width="2.6"/><path d="M1631.6 411.8H1660.7" stroke="#444" stroke-width="2.6"/><path d="M1401.2 416.7H1418.5" stroke="#fff" stroke-width="2.6"/><path d="M1486.0 416.7H1500.3" stroke="#444" stroke-width="2.6"/><path d="M1566.8 416.7H1583.8" stroke="#444" stroke-width="2.6"/><path d="M1631.6 416.7H1660.7" stroke="#444" stroke-width="2.6"/><path d="M1401.2 421.5H1418.5" stroke="#fff" stroke-width="2.6"/><path d="M1486.0 421.5H1500.3" stroke="#444" stroke-width="2.6"/><path d="M1566.8 421.5H1583.8" stroke="#444" stroke-width="2.6"/><path d="M1631.6 421.5H1660.7" stroke="#444" stroke-width="2.6"/><path d="M1401.2 426.5H1430.7" stroke="#fff" stroke-width="2.6"/><path d="M1478.3 426.5H1507.6" stroke="#444" stroke-width="2.6"/><path d="M1554.4 426.5H1583.8" stroke="#444" stroke-width="2.6"/><path d="M1631.6 426.5H1660.7" stroke="#444" stroke-width="2.6"/><path d="M1723 427.600V399.600M1730 427.600V399.600M1733 399.600H1720" stroke="#444" stroke-width="2.6" fill="none" stroke-linejoin="round" stroke-linecap="butt"/><path d="M1722 398.400h-2.500a8.500 8.500 0 0 0 0 17h2.500z" fill="#444"/><path d="M1755.5 408.8l6.300 6.300 6.300-6.300" stroke="#444" stroke-width="2.200" fill="none" stroke-linecap="round" stroke-linejoin="round"/><path d="M1788 396.500L1796.500 405" stroke="#444" stroke-width="2.4" fill="none" stroke-linejoin="round" stroke-linecap="round"/><path d="M1795.500 400.500a3 3 0 0 1 4.200 0L1808.800 409.600a3 3 0 0 1 0 4.200L1799.500 423.100a3 3 0 0 1-4.200 0L1786.200 414a3 3 0 0 1 0-4.200z" stroke="#444" stroke-width="2.4" fill="none" stroke-linejoin="round" stroke-linecap="round"/><path d="M1810.500 415.500c2.400 3.200 3.600 5 3.600 6.500a3.600 3.600 0 0 1-7.200 0c0-1.500 1.200-3.300 3.600-6.500z" fill="#444"/><rect x="1783.200" y="428.100" width="34" height="7" fill="#fff"/><path d="M1831.5 408.8l6.300 6.300 6.300-6.300" stroke="#444" stroke-width="2.200" fill="none" stroke-linecap="round" stroke-linejoin="round"/><rect x="1863.900" y="400" width="28.800" height="28.500" stroke="#444" stroke-width="2.600" fill="none"/><path d="M1878.300 404V425M1868 414.300H1889" stroke="#9a9a9a" stroke-width="2" stroke-dasharray="2.400 2.400" fill="none"/><path d="M1908.3 408.8l6.300 6.300 6.300-6.300" stroke="#444" stroke-width="2.200" fill="none" stroke-linecap="round" stroke-linejoin="round"/></svg>
<div class="a" style="left:786.0px;top:389.0px;width:48.0px;height:48.0px;background:#7e838d;border-radius:3px"></div>
<div class="t " style="left:798.14px;top:393.2px;font-size:32.70px;line-height:40px;color:#fff;letter-spacing:-2.080px;font-weight:700;">B</div>
<div class="a" style="left:786.4px;top:320.2px;width:232.6px;height:51.2px;background:#fff;border:1.500px solid #cfcfcf;border-radius:6px"></div>
<div class="t " style="left:793.68px;top:327.7px;font-size:26.40px;line-height:34px;color:#3a3a3a;letter-spacing:0.229px;">Calibri</div>
<div class="a" style="left:1028.4px;top:320.2px;width:107.1px;height:51.2px;background:#fff;border:1.500px solid #cfcfcf;border-radius:6px"></div>
<div class="t " style="left:1036.29px;top:327.7px;font-size:26.40px;line-height:34px;color:#3a3a3a;letter-spacing:-0.085px;">14</div>
<svg class="a" style="left:990px;top:335px" width="150" height="22" viewBox="990 335 150 22"><path d="M997.700 342.800l6.300 6.300 6.300-6.300M1114.500 342.800l6.300 6.300 6.300-6.300" stroke="#444" stroke-width="2.200" fill="none" stroke-linecap="round" stroke-linejoin="round"/></svg>
<div class="t " style="left:2109.63px;top:382.6px;font-size:26.50px;line-height:34px;color:#444;letter-spacing:0.391px;">More</div>
<div class="a" style="left:597.2px;top:472.0px;width:35.6px;height:35.6px;background:#e1e1e1;border:2px solid #d0d0d0"></div>
<svg class="a" style="left:608px;top:483px" width="16" height="16" viewBox="0 0 16 16"><path d="M2 0V13.500H15" stroke="#000" stroke-width="4" fill="none"/></svg>
<div class="a" style="left:639.4px;top:473.5px;width:1522.6px;height:33.0px;background:#d6d6d6;border-top:1.500px solid #cbcbcb;border-bottom:1.500px solid #cbcbcb"></div>
<div class="a" style="left:750.0px;top:475.0px;width:1243.6px;height:30.0px;background:#fff"></div>
<svg class="a" style="left:639px;top:0" width="1530" height="522" viewBox="0 0 1530 522"><path d="M8.2 486V492" stroke="#555" stroke-width="2"/><text x="28.7" y="498.600" text-anchor="middle" font-size="23.500" fill="#444" font-family="Liberation Sans,sans-serif">1</text><path d="M49.1 486V492" stroke="#555" stroke-width="2"/><path d="M69.6 483.500V494.500" stroke="#555" stroke-width="2"/><path d="M90.0 486V492" stroke="#555" stroke-width="2"/><path d="M131.0 486V492" stroke="#555" stroke-width="2"/><path d="M151.4 483.500V494.500" stroke="#555" stroke-width="2"/><path d="M171.9 486V492" stroke="#555" stroke-width="2"/><text x="192.3" y="498.600" text-anchor="middle" font-size="23.500" fill="#444" font-family="Liberation Sans,sans-serif">1</text><path d="M212.8 486V492" stroke="#555" stroke-width="2"/><path d="M233.2 483.500V494.500" stroke="#555" stroke-width="2"/><path d="M253.6 486V492" stroke="#555" stroke-width="2"/><text x="274.1" y="498.600" text-anchor="middle" font-size="23.500" fill="#444" font-family="Liberation Sans,sans-serif">2</text><path d="M294.5 486V492" stroke="#555" stroke-width="2"/><path d="M315.0 483.500V494.500" stroke="#555" stroke-width="2"/><path d="M335.5 486V492" stroke="#555" stroke-width="2"/><text x="355.9" y="498.600" text-anchor="middle" font-size="23.500" fill="#444" font-family="Liberation Sans,sans-serif">3</text><path d="M376.3 486V492" stroke="#555" stroke-width="2"/><path d="M396.8 483.500V494.500" stroke="#555" stroke-width="2"/><path d="M417.2 486V492" stroke="#555" stroke-width="2"/><text x="437.7" y="498.600" text-anchor="middle" font-size="23.500" fill="#444" font-family="Liberation Sans,sans-serif">4</text><path d="M458.2 486V492" stroke="#555" stroke-width="2"/><path d="M478.6 483.500V494.500" stroke="#555" stroke-width="2"/><path d="M499.0 486V492" stroke="#555" stroke-width="2"/><text x="519.5" y="498.600" text-anchor="middle" font-size="23.500" fill="#444" font-family="Liberation Sans,sans-serif">5</text><path d="M540.0 486V492" stroke="#555" stroke-width="2"/><path d="M560.4 483.500V494.500" stroke="#555" stroke-width="2"/><path d="M580.8 486V492" stroke="#555" stroke-width="2"/><text x="601.3" y="498.600" text-anchor="middle" font-size="23.500" fill="#444" font-family="Liberation Sans,sans-serif">6</text><path d="M621.8 486V492" stroke="#555" stroke-width="2"/><path d="M642.2 483.500V494.500" stroke="#555" stroke-width="2"/><path d="M662.7 486V492" stroke="#555" stroke-width="2"/><text x="683.1" y="498.600" text-anchor="middle" font-size="23.500" fill="#444" font-family="Liberation Sans,sans-serif">7</text><path d="M703.5 486V492" stroke="#555" stroke-width="2"/><path d="M724.0 483.500V494.500" stroke="#555" stroke-width="2"/><path d="M744.4 486V492" stroke="#555" stroke-width="2"/><text x="764.9" y="498.600" text-anchor="middle" font-size="23.500" fill="#444" font-family="Liberation Sans,sans-serif">8</text><path d="M785.3 486V492" stroke="#555" stroke-width="2"/><path d="M805.8 483.500V494.500" stroke="#555" stroke-width="2"/><path d="M826.2 486V492" stroke="#555" stroke-width="2"/><text x="846.7" y="498.600" text-anchor="middle" font-size="23.500" fill="#444" font-family="Liberation Sans,sans-serif">9</text><path d="M867.2 486V492" stroke="#555" stroke-width="2"/><path d="M887.6 483.500V494.500" stroke="#555" stroke-width="2"/><path d="M908.0 486V492" stroke="#555" stroke-width="2"/><text x="928.5" y="498.600" text-anchor="middle" font-size="23.500" fill="#444" font-family="Liberation Sans,sans-serif">10</text><path d="M948.9 486V492" stroke="#555" stroke-width="2"/><path d="M969.4 483.500V494.500" stroke="#555" stroke-width="2"/><path d="M989.8 486V492" stroke="#555" stroke-width="2"/><text x="1010.3" y="498.600" text-anchor="middle" font-size="23.500" fill="#444" font-family="Liberation Sans,sans-serif">11</text><path d="M1030.8 486V492" stroke="#555" stroke-width="2"/><path d="M1051.2 483.500V494.500" stroke="#555" stroke-width="2"/><path d="M1071.7 486V492" stroke="#555" stroke-width="2"/><text x="1092.1" y="498.600" text-anchor="middle" font-size="23.500" fill="#444" font-family="Liberation Sans,sans-serif">12</text><path d="M1112.5 486V492" stroke="#555" stroke-width="2"/><path d="M1133.0 483.500V494.500" stroke="#555" stroke-width="2"/><path d="M1153.5 486V492" stroke="#555" stroke-width="2"/><text x="1173.9" y="498.600" text-anchor="middle" font-size="23.500" fill="#444" font-family="Liberation Sans,sans-serif">13</text><path d="M1194.3 486V492" stroke="#555" stroke-width="2"/><path d="M1214.8 483.500V494.500" stroke="#555" stroke-width="2"/><path d="M1235.2 486V492" stroke="#555" stroke-width="2"/><text x="1255.7" y="498.600" text-anchor="middle" font-size="23.500" fill="#444" font-family="Liberation Sans,sans-serif">14</text><path d="M1276.1 486V492" stroke="#555" stroke-width="2"/><path d="M1296.6 483.500V494.500" stroke="#555" stroke-width="2"/><path d="M1317.0 486V492" stroke="#555" stroke-width="2"/><text x="1337.5" y="498.600" text-anchor="middle" font-size="23.500" fill="#444" font-family="Liberation Sans,sans-serif">15</text><path d="M1358.0 486V492" stroke="#555" stroke-width="2"/><path d="M1378.4 483.500V494.500" stroke="#555" stroke-width="2"/><path d="M1398.8 486V492" stroke="#555" stroke-width="2"/><text x="1419.3" y="498.600" text-anchor="middle" font-size="23.500" fill="#444" font-family="Liberation Sans,sans-serif">16</text><path d="M1439.8 486V492" stroke="#555" stroke-width="2"/><path d="M1460.2 483.500V494.500" stroke="#555" stroke-width="2"/><path d="M1480.6 486V492" stroke="#555" stroke-width="2"/><text x="1501.1" y="498.600" text-anchor="middle" font-size="23.500" fill="#444" font-family="Liberation Sans,sans-serif">17</text><path d="M214.5 509V516" stroke="#555" stroke-width="2"/><path d="M318.5 509V516" stroke="#555" stroke-width="2"/><path d="M422.5 509V516" stroke="#555" stroke-width="2"/><path d="M526.5 509V516" stroke="#555" stroke-width="2"/><path d="M630.5 509V516" stroke="#555" stroke-width="2"/><path d="M734.5 509V516" stroke="#555" stroke-width="2"/><path d="M838.5 509V516" stroke="#555" stroke-width="2"/><path d="M942.5 509V516" stroke="#555" stroke-width="2"/><path d="M1046.5 509V516" stroke="#555" stroke-width="2"/><path d="M1150.5 509V516" stroke="#555" stroke-width="2"/><path d="M1254.5 509V516" stroke="#555" stroke-width="2"/></svg>
<svg class="a" style="left:737.0px;top:464.0px;" width="26" height="56" viewBox="0 0 26 56" fill="none"><path d="M3 3H23.500V9L13.200 22 3 9z" fill="#fff" stroke="#444" stroke-width="2" stroke-linejoin="round"/><path d="M13.200 27L23.500 35.500V42H3V35.500z" fill="#fff" stroke="#444" stroke-width="2" stroke-linejoin="round"/><rect x="3" y="42" width="20.500" height="12" fill="#fff" stroke="#444" stroke-width="2"/></svg>
<svg class="a" style="left:1981.0px;top:489.0px;" width="26" height="20" viewBox="0 0 26 20" fill="none"><path d="M13 2.500L23.500 11V17.500H2.800V11z" fill="#fff" stroke="#444" stroke-width="2" stroke-linejoin="round"/></svg>
<div class="a" style="left:2162.9px;top:459.0px;width:33.1px;height:1284.5px;background:#e0e0e0"></div>
<div class="a" style="left:2164.6px;top:462.8px;width:28.0px;height:28.2px;background:#f1f1f1;border:1.500px solid #d6d6d6"></div>
<svg class="a" style="left:2170.8px;top:472.0px;" width="15" height="8" viewBox="0 0 15 8" fill="none"><path d="M7.300 0L14.600 7.700H0z" fill="#adadad"/></svg>
<div class="a" style="left:2163.6px;top:734.5px;width:29.4px;height:314.5px;background:#f1f1f1;border:1.800px solid #cbcbcb"></div>
<div class="a" style="left:2173.0px;top:876.2px;width:11.3px;height:1.5px;background:#c8c8c8"></div>
<div class="a" style="left:2173.0px;top:880.2px;width:11.3px;height:1.5px;background:#c8c8c8"></div>
<div class="a" style="left:2173.0px;top:884.3px;width:11.3px;height:1.5px;background:#c8c8c8"></div>
<div class="a" style="left:2173.0px;top:888.4px;width:11.3px;height:1.5px;background:#c8c8c8"></div>
<div class="a" style="left:2173.0px;top:892.4px;width:11.3px;height:1.5px;background:#c8c8c8"></div>
<div class="a" style="left:2173.0px;top:896.5px;width:11.3px;height:1.5px;background:#c8c8c8"></div>
<div class="a" style="left:2173.0px;top:900.5px;width:11.3px;height:1.5px;background:#c8c8c8"></div>
<div class="a" style="left:2164.6px;top:1711.0px;width:28.0px;height:28.2px;background:#f1f1f1;border:1.500px solid #d6d6d6"></div>
<svg class="a" style="left:2170.8px;top:1721.5px;" width="15" height="8" viewBox="0 0 15 8" fill="none"><path d="M0 0H14.600L7.300 7.700z" fill="#adadad"/></svg>
<div class="a" style="left:593.0px;top:1743.2px;width:1603.0px;height:29.0px;background:#e0e0e0"></div>
<div class="a" style="left:595.7px;top:1744.5px;width:29.7px;height:27.6px;background:#f1f1f1;border:1.500px solid #d6d6d6"></div>
<svg class="a" style="left:606.4px;top:1750.8px;" width="8" height="15" viewBox="0 0 8 15" fill="none"><path d="M7.800 0V14.400L0 7.200z" fill="#adadad"/></svg>
<div class="a" style="left:710.5px;top:1744.0px;width:1228.0px;height:28.1px;background:#f1f1f1;border:1.800px solid #cbcbcb"></div>
<div class="a" style="left:1307.0px;top:1752.5px;width:1.5px;height:11.3px;background:#c8c8c8"></div>
<div class="a" style="left:1311.0px;top:1752.5px;width:1.5px;height:11.3px;background:#c8c8c8"></div>
<div class="a" style="left:1315.1px;top:1752.5px;width:1.5px;height:11.3px;background:#c8c8c8"></div>
<div class="a" style="left:1319.2px;top:1752.5px;width:1.5px;height:11.3px;background:#c8c8c8"></div>
<div class="a" style="left:1323.2px;top:1752.5px;width:1.5px;height:11.3px;background:#c8c8c8"></div>
<div class="a" style="left:1327.2px;top:1752.5px;width:1.5px;height:11.3px;background:#c8c8c8"></div>
<div class="a" style="left:1331.3px;top:1752.5px;width:1.5px;height:11.3px;background:#c8c8c8"></div>
<div class="a" style="left:2132.5px;top:1744.5px;width:29.7px;height:27.6px;background:#f1f1f1;border:1.500px solid #d6d6d6"></div>
<svg class="a" style="left:2143.5px;top:1750.8px;" width="8" height="15" viewBox="0 0 8 15" fill="none"><path d="M0 0L7.800 7.200 0 14.400z" fill="#adadad"/></svg>
<div class="a" style="left:2162.9px;top:1743.2px;width:33.1px;height:29.0px;background:#e0e0e0"></div>
<div class="a" style="left:593.0px;top:1772.1px;width:1603.0px;height:64.0px;background:#f1f1f1"></div>
<div class="a" style="left:593.0px;top:1772.1px;width:1603.0px;height:4.0px;background:#e6e6e6"></div>
<div class="a" style="left:593.0px;top:1775.6px;width:1603.0px;height:1.5px;background:#cfcfcf"></div>
<div class="a" style="left:766.0px;top:1777.0px;width:1.5px;height:59.0px;background:#d8d8d8"></div>
<div class="a" style="left:1171.5px;top:1777.0px;width:1.5px;height:59.0px;background:#d8d8d8"></div>
<div class="a" style="left:1629.0px;top:1777.0px;width:1.5px;height:59.0px;background:#d8d8d8"></div>
<div class="a" style="left:1735.0px;top:1777.0px;width:1.5px;height:59.0px;background:#d8d8d8"></div>
<div class="t " style="left:616.40px;top:1787.7px;font-size:25.60px;line-height:34px;color:#444;letter-spacing:0.494px;">Page 1 of 2</div>
<svg class="a" style="left:789.0px;top:1787.0px;" width="34" height="38" viewBox="0 0 34 38" fill="none"><path d="M2.500 3H31.400M2.500 10.400H31.400M2.500 17.500H21.500" stroke="#444" stroke-width="2.200"/><text x="1.500" y="35.200" font-size="14.500" font-weight="700" fill="#444" font-family="Liberation Sans,sans-serif" letter-spacing="1.500">123</text></svg>
<div class="t " style="left:840.50px;top:1787.7px;font-size:25.60px;line-height:34px;color:#444;letter-spacing:0.383px;">Word count</div>
<div class="t " style="left:1195.60px;top:1787.9px;font-size:25.60px;line-height:34px;color:#444;letter-spacing:0.378px;">English – United States</div>
<svg class="a" style="left:1480px;top:1776px" width="716" height="60" viewBox="1480 1776 716 60"><path d="M1488.7 1804.1l6.300 6.300 6.300-6.300" stroke="#444" stroke-width="2.200" fill="none" stroke-linecap="round" stroke-linejoin="round"/><circle cx="1534.100" cy="1807" r="16.300" stroke="#444" stroke-width="2.400" fill="none"/><ellipse cx="1534.100" cy="1807" rx="9" ry="16.300" stroke="#444" stroke-width="2.400" fill="none"/><path d="M1534.100 1790.700V1823.300M1520 1799.400H1548.200M1520 1814.600H1548.200" stroke="#444" stroke-width="2.4" fill="none" stroke-linejoin="round" stroke-linecap="round"/><rect x="1566.100" y="1781.900" width="47.600" height="47.600" rx="3" fill="#7e838d"/><path d="M1587.600 1813.800l2.200-2.300 4.600 5.100 12.700-13.300 1.200 .6-14 17.300z" fill="#fff" stroke="#fff" stroke-width="1" stroke-linejoin="round"/><path d="M1651.200 1794.800L1655.400 1798.400 1662.800 1790.700M1667.300 1790.700L1676.500 1799.400M1676.500 1790.700L1667.300 1799.400" stroke="#444" stroke-width="2.3" fill="none" stroke-linejoin="round" stroke-linecap="round"/><path d="M1651.2 1806.7H1665.3" stroke="#444" stroke-width="2.3"/><path d="M1651.2 1814.3H1661.2" stroke="#444" stroke-width="2.3"/><path d="M1651.2 1821.7H1658.3" stroke="#444" stroke-width="2.3"/><path d="M1665 1816.200L1679.800 1801.400a2.500 2.500 0 0 1 3.500 0l2.300 2.300a2.500 2.500 0 0 1 0 3.500L1670.800 1822l-6.500 1.200z" stroke="#444" stroke-width="2.4" fill="none" stroke-linejoin="round" stroke-linecap="round"/><path d="M1677.500 1803.700l5.800 5.800" stroke="#444" stroke-width="2.2" fill="none" stroke-linejoin="round" stroke-linecap="round"/><path d="M1700.6 1803.6l6.300 6.300 6.300-6.300" stroke="#444" stroke-width="2.200" fill="none" stroke-linecap="round" stroke-linejoin="round"/><rect x="1762.500" y="1790.800" width="27.600" height="32.100" rx="1.500" stroke="#444" stroke-width="2.600" fill="none"/><path d="M1776.400 1794V1820M1765.500 1806.900H1787.300M1772.400 1798L1776.400 1794l4 4M1772.400 1816l4 4 4-4M1769.500 1802.900l-4 4 4 4M1783.300 1802.900l4 4-4 4" stroke="#444" stroke-width="2.0" fill="none" stroke-linejoin="round" stroke-linecap="round"/><path d="M1824 1794V1820.100M1860.700 1794V1820.100M1828.500 1807.200H1856.200M1834 1801.700L1828.500 1807.200 1834 1812.700M1850.700 1801.700L1856.200 1807.200 1850.700 1812.700" stroke="#444" stroke-width="2.3" fill="none" stroke-linejoin="round" stroke-linecap="round"/><path d="M1897.2 1807.3H1921.0" stroke="#444" stroke-width="2.4"/><path d="M2137.2 1807.4H2163.6" stroke="#444" stroke-width="2.4"/><path d="M2150.400 1794.200V1820.700" stroke="#444" stroke-width="2.4" fill="none" stroke-linejoin="round" stroke-linecap="butt"/></svg>
<div class="t " style="left:1573.20px;top:1790.4px;font-size:19.50px;line-height:22px;color:#fff;font-weight:700;font-family:'DejaVu Sans Mono','Liberation Mono',monospace;letter-spacing:-0.5px;font-weight:400;">ABC</div>
<div class="t " style="left:1965.01px;top:1787.9px;font-size:25.60px;line-height:34px;color:#444;letter-spacing:0.545px;">Zoom 90%</div>
<div class="a" style="left:593.0px;top:521.0px;width:46.4px;height:1222.0px;background:#e2e2e2"></div>
<div class="a" style="left:639.4px;top:521.0px;width:1522.6px;height:1222.0px;background:#fff"></div>
<div class="a" style="left:601.0px;top:521.0px;width:29.0px;height:1222.0px;background:#fff;border-left:1.500px solid #cfcfcf;border-right:1.500px solid #cfcfcf"></div>
<div class="a" style="left:602.5px;top:1712.0px;width:26.0px;height:31.0px;background:#d6d6d6"></div>
<svg class="a" style="left:600px;top:521px" width="31" height="1222" viewBox="0 0 31 1222"><path d="M8.500 17.1H21" stroke="#555" stroke-width="2"/><path d="M12 37.5H17.500" stroke="#555" stroke-width="2"/><text transform="translate(25.8 58.0) rotate(-90)" text-anchor="middle" font-size="23.500" fill="#444" font-family="Liberation Sans,sans-serif">9</text><path d="M12 78.5H17.500" stroke="#555" stroke-width="2"/><path d="M8.500 98.9H21" stroke="#555" stroke-width="2"/><path d="M12 119.4H17.500" stroke="#555" stroke-width="2"/><text transform="translate(25.8 139.8) rotate(-90)" text-anchor="middle" font-size="23.500" fill="#444" font-family="Liberation Sans,sans-serif">10</text><path d="M12 160.2H17.500" stroke="#555" stroke-width="2"/><path d="M8.500 180.7H21" stroke="#555" stroke-width="2"/><path d="M12 201.1H17.500" stroke="#555" stroke-width="2"/><text transform="translate(25.8 221.6) rotate(-90)" text-anchor="middle" font-size="23.500" fill="#444" font-family="Liberation Sans,sans-serif">11</text><path d="M12 242.0H17.500" stroke="#555" stroke-width="2"/><path d="M8.500 262.5H21" stroke="#555" stroke-width="2"/><path d="M12 283.0H17.500" stroke="#555" stroke-width="2"/><text transform="translate(25.8 303.4) rotate(-90)" text-anchor="middle" font-size="23.500" fill="#444" font-family="Liberation Sans,sans-serif">12</text><path d="M12 323.8H17.500" stroke="#555" stroke-width="2"/><path d="M8.500 344.3H21" stroke="#555" stroke-width="2"/><path d="M12 364.8H17.500" stroke="#555" stroke-width="2"/><text transform="translate(25.8 385.2) rotate(-90)" text-anchor="middle" font-size="23.500" fill="#444" font-family="Liberation Sans,sans-serif">13</text><path d="M12 405.6H17.500" stroke="#555" stroke-width="2"/><path d="M8.500 426.1H21" stroke="#555" stroke-width="2"/><path d="M12 446.5H17.500" stroke="#555" stroke-width="2"/><text transform="translate(25.8 467.0) rotate(-90)" text-anchor="middle" font-size="23.500" fill="#444" font-family="Liberation Sans,sans-serif">14</text><path d="M12 487.5H17.500" stroke="#555" stroke-width="2"/><path d="M8.500 507.9H21" stroke="#555" stroke-width="2"/><path d="M12 528.3H17.500" stroke="#555" stroke-width="2"/><text transform="translate(25.8 548.8) rotate(-90)" text-anchor="middle" font-size="23.500" fill="#444" font-family="Liberation Sans,sans-serif">15</text><path d="M12 569.2H17.500" stroke="#555" stroke-width="2"/><path d="M8.500 589.7H21" stroke="#555" stroke-width="2"/><path d="M12 610.2H17.500" stroke="#555" stroke-width="2"/><text transform="translate(25.8 630.6) rotate(-90)" text-anchor="middle" font-size="23.500" fill="#444" font-family="Liberation Sans,sans-serif">16</text><path d="M12 651.0H17.500" stroke="#555" stroke-width="2"/><path d="M8.500 671.5H21" stroke="#555" stroke-width="2"/><path d="M12 691.9H17.500" stroke="#555" stroke-width="2"/><text transform="translate(25.8 712.4) rotate(-90)" text-anchor="middle" font-size="23.500" fill="#444" font-family="Liberation Sans,sans-serif">17</text><path d="M12 732.8H17.500" stroke="#555" stroke-width="2"/><path d="M8.500 753.3H21" stroke="#555" stroke-width="2"/><path d="M12 773.8H17.500" stroke="#555" stroke-width="2"/><text transform="translate(25.8 794.2) rotate(-90)" text-anchor="middle" font-size="23.500" fill="#444" font-family="Liberation Sans,sans-serif">18</text><path d="M12 814.7H17.500" stroke="#555" stroke-width="2"/><path d="M8.500 835.1H21" stroke="#555" stroke-width="2"/><path d="M12 855.5H17.500" stroke="#555" stroke-width="2"/><text transform="translate(25.8 876.0) rotate(-90)" text-anchor="middle" font-size="23.500" fill="#444" font-family="Liberation Sans,sans-serif">19</text><path d="M12 896.4H17.500" stroke="#555" stroke-width="2"/><path d="M8.500 916.9H21" stroke="#555" stroke-width="2"/><path d="M12 937.3H17.500" stroke="#555" stroke-width="2"/><text transform="translate(25.8 957.8) rotate(-90)" text-anchor="middle" font-size="23.500" fill="#444" font-family="Liberation Sans,sans-serif">20</text><path d="M12 978.2H17.500" stroke="#555" stroke-width="2"/><path d="M8.500 998.7H21" stroke="#555" stroke-width="2"/><path d="M12 1019.2H17.500" stroke="#555" stroke-width="2"/><text transform="translate(25.8 1039.6) rotate(-90)" text-anchor="middle" font-size="23.500" fill="#444" font-family="Liberation Sans,sans-serif">21</text><path d="M12 1060.0H17.500" stroke="#555" stroke-width="2"/><path d="M8.500 1080.5H21" stroke="#555" stroke-width="2"/><path d="M12 1101.0H17.500" stroke="#555" stroke-width="2"/><text transform="translate(25.8 1121.4) rotate(-90)" text-anchor="middle" font-size="23.500" fill="#444" font-family="Liberation Sans,sans-serif">22</text><path d="M12 1141.8H17.500" stroke="#555" stroke-width="2"/><path d="M8.500 1162.3H21" stroke="#555" stroke-width="2"/><path d="M12 1182.8H17.500" stroke="#555" stroke-width="2"/><text transform="translate(25.8 1203.2) rotate(-90)" text-anchor="middle" font-size="23.500" fill="#444" font-family="Liberation Sans,sans-serif">23</text></svg>
<div class="a" style="left:749.8px;top:520.5px;width:1400px;height:14px;overflow:hidden">
<div class="t d" style="left:46.6px;top:-31.200px;font-size:31.65px;line-height:38px;color:#000">history</div>
<div class="t d" style="left:379.1px;top:-31.200px;font-size:31.65px;line-height:38px;color:#000">strong</div>
</div>
<div class="t d" style="left:749.80px;top:601.90px;font-size:40.40px;line-height:48px;color:#44608f;font-weight:700;letter-spacing:0.098px;">3. Asset Analysis</div>
<div class="a" style="left:733.8px;top:655.6px;width:1245.4px;height:115.1px;border:1.400px solid #000"></div>
<div class="a" style="left:1355.3px;top:656.3px;width:1.4px;height:113.7px;background:#000"></div>
<div class="t d" style="left:749.80px;top:657.63px;font-size:31.65px;line-height:37px;color:#000;letter-spacing:0.245px;">Verified Assets (April)</div>
<div class="t d" style="left:1371.30px;top:657.63px;font-size:31.65px;line-height:37px;color:#000;letter-spacing:0.010px;">$53,201.20</div>
<div class="a" style="left:734.5px;top:693.5px;width:1244.0px;height:1.4px;background:#000"></div>
<div class="t d" style="left:749.80px;top:695.53px;font-size:31.65px;line-height:37px;color:#000;letter-spacing:0.137px;">Funds Needed</div>
<div class="t d" style="left:1371.30px;top:695.53px;font-size:31.65px;line-height:37px;color:#000;letter-spacing:0.010px;">$97,750.00</div>
<div class="a" style="left:734.5px;top:731.4px;width:1244.0px;height:1.4px;background:#000"></div>
<div class="t d" style="left:749.80px;top:733.43px;font-size:31.65px;line-height:37px;color:#000;letter-spacing:0.237px;">Shortfall</div>
<div class="t d" style="left:1371.30px;top:733.43px;font-size:31.65px;line-height:37px;color:#000;letter-spacing:0.261px;">($44,548.80)</div>
<div class="t d" style="left:749.80px;top:771.83px;font-size:31.65px;line-height:37px;color:#000;letter-spacing:0.050px;">Shortfall to be covered by gift funds (Gift Letter pending).</div>
<div class="a" style="left:749.8px;top:881.8px;width:398.4px;height:46.2px;background:#ffff54"></div>
<div class="t d" style="left:749.80px;top:881.80px;font-size:40.40px;line-height:48px;color:#44608f;font-weight:700;letter-spacing:-0.054px;">4. Credit &amp; Liabilities</div>
<div class="a" style="left:749.0px;top:882.0px;width:4.0px;height:45.5px;background:#44608f"></div>
<div class="a" style="left:749.8px;top:936.8px;width:857.1px;height:34.7px;background:#ffff54"></div>
<div class="t d" style="left:749.80px;top:934.93px;font-size:31.65px;line-height:37px;color:#000;letter-spacing:0.042px;">Mid Score: 748 (Equifax 745, Experian 752, TransUnion 748)</div>
<div class="a" style="left:749.8px;top:978.5px;width:955.4px;height:35.2px;background:#ffff54"></div>
<div class="t d" style="left:749.80px;top:977.03px;font-size:31.65px;line-height:37px;color:#000;letter-spacing:0.019px;">Liabilities calculated based on Conventional underwriting guidelines.</div>
<div class="a" style="left:733.8px;top:1047.6px;width:1245.4px;height:152.2px;border:1.400px solid #000"></div>
<div class="a" style="left:1355.3px;top:1048.3px;width:1.4px;height:150.8px;background:#000"></div>
<div class="a" style="left:749.8px;top:1050.0px;width:414.1px;height:35.3px;background:#ffff54"></div>
<div class="t d" style="left:749.80px;top:1049.63px;font-size:31.65px;line-height:37px;color:#000;letter-spacing:0.188px;">Auto Loan - Toyota ($18,500)</div>
<div class="a" style="left:1371.3px;top:1050.0px;width:115.0px;height:35.3px;background:#ffff54"></div>
<div class="t d" style="left:1371.30px;top:1049.63px;font-size:31.65px;line-height:37px;color:#000;letter-spacing:0.031px;">$450.00</div>
<div class="a" style="left:734.5px;top:1085.3px;width:1244.0px;height:1.4px;background:#000"></div>
<div class="a" style="left:749.8px;top:1087.7px;width:273.6px;height:35.3px;background:#ffff54"></div>
<div class="t d" style="left:749.80px;top:1087.33px;font-size:31.65px;line-height:37px;color:#000;letter-spacing:0.081px;">Chase CC ($2,500)</div>
<div class="a" style="left:1371.3px;top:1087.7px;width:97.6px;height:35.3px;background:#ffff54"></div>
<div class="t d" style="left:1371.30px;top:1087.33px;font-size:31.65px;line-height:37px;color:#000;letter-spacing:0.083px;">$50.00</div>
<div class="a" style="left:734.5px;top:1123.0px;width:1244.0px;height:1.4px;background:#000"></div>
<div class="a" style="left:749.8px;top:1125.4px;width:322.5px;height:35.3px;background:#ffff54"></div>
<div class="t d" style="left:749.80px;top:1125.03px;font-size:31.65px;line-height:37px;color:#000;letter-spacing:0.048px;">Capital One CC ($800)</div>
<div class="a" style="left:1371.3px;top:1125.4px;width:97.6px;height:35.3px;background:#ffff54"></div>
<div class="t d" style="left:1371.30px;top:1125.03px;font-size:31.65px;line-height:37px;color:#000;letter-spacing:0.083px;">$35.00</div>
<div class="a" style="left:734.5px;top:1160.7px;width:1244.0px;height:1.4px;background:#000"></div>
<div class="a" style="left:749.8px;top:1163.1px;width:267.0px;height:35.3px;background:#ffff54"></div>
<div class="t d" style="left:749.80px;top:1162.73px;font-size:31.65px;line-height:37px;color:#000;letter-spacing:0.206px;">Total Monthly Debt</div>
<div class="a" style="left:1371.3px;top:1163.1px;width:115.0px;height:35.3px;background:#ffff54"></div>
<div class="t d" style="left:1371.30px;top:1162.73px;font-size:31.65px;line-height:37px;color:#000;letter-spacing:0.031px;">$535.00</div>
<div class="t d" style="left:749.80px;top:1269.90px;font-size:40.40px;line-height:48px;color:#44608f;font-weight:700;letter-spacing:-0.033px;">5. Debt-to-Income Ratios</div>
<div class="a" style="left:733.8px;top:1322.6px;width:1245.4px;height:76.8px;border:1.400px solid #000"></div>
<div class="a" style="left:1355.3px;top:1323.3px;width:1.4px;height:75.4px;background:#000"></div>
<div class="t d" style="left:749.80px;top:1324.63px;font-size:31.65px;line-height:37px;color:#000;letter-spacing:0.130px;">Front-End (Housing)</div>
<div class="t d" style="left:1371.30px;top:1324.63px;font-size:31.65px;line-height:37px;color:#000;letter-spacing:0.177px;">34.84%</div>
<div class="a" style="left:734.5px;top:1360.3px;width:1244.0px;height:1.4px;background:#000"></div>
<div class="t d" style="left:749.80px;top:1362.33px;font-size:31.65px;line-height:37px;color:#000;letter-spacing:0.414px;">Back-End (Total)</div>
<div class="t d" style="left:1371.30px;top:1362.33px;font-size:31.65px;line-height:37px;color:#000;letter-spacing:0.177px;">41.53%</div>
<div class="t d" style="left:749.80px;top:1469.10px;font-size:40.40px;line-height:48px;color:#44608f;font-weight:700;letter-spacing:-0.040px;">6. Underwriting Flags &amp; Conditions</div>
<div class="t d" style="left:751.70px;top:1522.86px;font-size:31.00px;line-height:37px;color:#000;">•</div>
<div class="t d" style="left:801.30px;top:1522.33px;font-size:31.65px;line-height:37px;color:#000;letter-spacing:0.046px;">Asset Shortfall: Nearly $45k missing; Gift Letter required.</div>
<div class="t d" style="left:751.70px;top:1565.06px;font-size:31.00px;line-height:37px;color:#000;">•</div>
<div class="t d" style="left:801.30px;top:1564.53px;font-size:31.65px;line-height:37px;color:#000;letter-spacing:0.046px;">Unsourced Deposit: $2,500 cash deposit on 3/5 requires LOX.</div>
<div class="t d" style="left:751.70px;top:1607.26px;font-size:31.00px;line-height:37px;color:#000;">•</div>
<div class="t d" style="left:801.30px;top:1606.73px;font-size:31.65px;line-height:37px;color:#000;letter-spacing:0.023px;">Balance Discrepancy: $2,850 drop between March/April statements requires</div>
<div class="t d" style="left:801.30px;top:1648.93px;font-size:31.65px;line-height:37px;color:#000;letter-spacing:0.154px;">explanation.</div>
<div class="a" style="left:2196.0px;top:82.0px;width:744.0px;height:1754.0px;background:#f4f7fa"></div>
<div class="a" style="left:2196.0px;top:82.0px;width:12.0px;height:1754.0px;background:linear-gradient(90deg,rgba(140,150,170,.11),rgba(140,150,170,0))"></div>
<div class="t " style="left:2244.95px;top:107.5px;font-size:26.90px;line-height:35px;color:#1f2937;letter-spacing:0.488px;">Agent</div>
<svg class="a" style="left:2711.0px;top:105.5px;" width="34" height="34" viewBox="0 0 34 34" fill="none"><path d="M17 2.500V31.500M2.500 17H31.500" stroke="#5b6b7d" stroke-width="2.400" stroke-linecap="round" stroke-linejoin="round"/></svg>
<svg class="a" style="left:2757.0px;top:118.0px;" width="22" height="14" viewBox="0 0 22 14" fill="none"><path d="M2.500 2.500L11 11l8.500-8.500" stroke="#5b6b7d" stroke-width="2.400" stroke-linecap="round" stroke-linejoin="round"/></svg>
<svg class="a" style="left:2803.0px;top:104.0px;" width="40" height="40" viewBox="0 0 40 40" fill="none"><path d="M8.700 20.500a11 11 0 0 1 22 0v2.500a11 11 0 0 1-22 0z" stroke="#5b6b7d" stroke-width="2.400" stroke-linecap="round" stroke-linejoin="round"/><path d="M9.500 14.500H30" stroke="#5b6b7d" stroke-width="2.400" stroke-linecap="round" stroke-linejoin="round"/><path d="M13 10a6.700 6.700 0 0 1 13.400 0" stroke="#5b6b7d" stroke-width="2.400" stroke-linecap="round" stroke-linejoin="round"/><path d="M9.500 15.500L5.500 9.500M30 15.500l4-6M3.500 23.500H8.500M31 23.500h5M11.500 31.500L6.500 36.500M28 31.500l5 5" stroke="#5b6b7d" stroke-width="2.400" stroke-linecap="round" stroke-linejoin="round"/></svg>
<div class="a" style="left:2873.2px;top:121.3px;width:5.0px;height:5.0px;border-radius:50%;background:#5b6b7d"></div>
<div class="a" style="left:2883.4px;top:121.3px;width:5.0px;height:5.0px;border-radius:50%;background:#5b6b7d"></div>
<div class="a" style="left:2893.6px;top:121.3px;width:5.0px;height:5.0px;border-radius:50%;background:#5b6b7d"></div>
<svg class="a" style="left:2244.0px;top:178.0px;" width="34" height="28" viewBox="0 0 34 28" fill="none"><path d="M30.500 14H3.500M15 2.500L3.500 14L15 25.500" stroke="#5b6b7d" stroke-width="2.400" stroke-linecap="round" stroke-linejoin="round"/></svg>
<div class="t " style="left:2293.68px;top:175.3px;font-size:26.00px;line-height:34px;color:#1f2937;letter-spacing:0.737px;font-weight:700;">INCOME AND ASSET REVIEW FOR JOH…</div>
<svg class="a" style="left:2873.0px;top:174.0px;" width="38" height="36" viewBox="0 0 38 36" fill="none"><rect x="2.500" y="2.500" width="32" height="30.500" rx="5" stroke="#5b6b7d" stroke-width="2.400" stroke-linecap="round" stroke-linejoin="round"/><path d="M22 3V33" stroke="#5b6b7d" stroke-width="2.400" stroke-linecap="round" stroke-linejoin="round"/></svg>
<div class="a" style="left:2234.4px;top:219.0px;width:1.0px;height:273.0px;background:#cdd1d6"></div>
<div class="a" style="left:2397.1px;top:219.0px;width:1.0px;height:273.0px;background:#cdd1d6"></div>
<div class="a" style="left:2490.5px;top:219.0px;width:1.0px;height:273.0px;background:#cdd1d6"></div>
<div class="a" style="left:2646.5px;top:219.0px;width:1.0px;height:273.0px;background:#cdd1d6"></div>
<div class="a" style="left:2897.5px;top:219.0px;width:1.0px;height:273.0px;background:#cdd1d6"></div>
<div class="a" style="left:2234.4px;top:261.5px;width:664.3px;height:1.0px;background:#cdd1d6"></div>
<div class="a" style="left:2234.4px;top:376.5px;width:664.3px;height:1.0px;background:#cdd1d6"></div>
<div class="a" style="left:2234.4px;top:491.5px;width:664.3px;height:1.0px;background:#cdd1d6"></div>
<div class="a" style="left:2234px;top:219px;width:666px;height:42px;overflow:hidden">
<div class="t " style="left:16.55px;top:-13.4px;font-size:32.90px;line-height:46px;color:#1f2937;letter-spacing:-1.570px;font-weight:700;">CC</div>
<div class="t " style="left:179.68px;top:-13.4px;font-size:32.90px;line-height:46px;color:#1f2937;letter-spacing:1.345px;">500</div>
<div class="t " style="left:429.46px;top:-13.4px;font-size:32.90px;line-height:46px;color:#1f2937;letter-spacing:-0.430px;">(Revolving)</div>
</div>
<div class="t " style="left:2250.55px;top:274.0px;font-size:32.90px;line-height:46px;color:#1f2937;letter-spacing:0.227px;font-weight:700;">Capital</div>
<div class="t " style="left:2250.55px;top:320.9px;font-size:32.90px;line-height:46px;color:#1f2937;letter-spacing:-0.801px;font-weight:700;">One CC</div>
<div class="t " style="left:2414.67px;top:274.0px;font-size:32.90px;line-height:46px;color:#1f2937;letter-spacing:1.151px;">$80</div>
<div class="t " style="left:2416.00px;top:320.9px;font-size:32.90px;line-height:46px;color:#1f2937;">0</div>
<div class="t " style="left:2506.97px;top:296.9px;font-size:32.90px;line-height:46px;color:#1f2937;letter-spacing:0.334px;">$35.00</div>
<div class="t " style="left:2662.27px;top:274.0px;font-size:32.90px;line-height:46px;color:#1f2937;letter-spacing:-0.009px;">Included</div>
<div class="t " style="left:2663.46px;top:320.9px;font-size:32.90px;line-height:46px;color:#1f2937;letter-spacing:-0.430px;">(Revolving)</div>
<div class="t " style="left:2251.54px;top:388.1px;font-size:32.90px;line-height:46px;color:#1f2937;letter-spacing:0.175px;font-weight:700;">Total</div>
<div class="t " style="left:2249.73px;top:435.0px;font-size:32.90px;line-height:46px;color:#1f2937;letter-spacing:0.821px;font-weight:700;">Debt</div>
<div class="t " style="left:2506.87px;top:388.1px;font-size:32.90px;line-height:46px;color:#1f2937;letter-spacing:2.107px;font-weight:700;">$535.0</div>
<div class="t " style="left:2508.50px;top:435.0px;font-size:32.90px;line-height:46px;color:#1f2937;font-weight:700;">0</div>
<div class="t " style="left:2235.93px;top:526.9px;font-size:32.90px;line-height:46px;color:#1f2937;letter-spacing:-0.085px;">Analysis Highlights:</div>
<div class="t" style="left:2291.60px;top:598.2px;font-size:32.90px;line-height:46px;color:#1f2937;letter-spacing:-0.018px"><b>Installment Debt</b>: The Toyota auto loan</div>
<div class="t" style="left:2291.60px;top:645.1px;font-size:32.90px;line-height:46px;color:#1f2937;letter-spacing:-0.258px">has approximately 41 payments</div>
<div class="t" style="left:2291.60px;top:691.9px;font-size:32.90px;line-height:46px;color:#1f2937;letter-spacing:-0.175px">remaining based on the balance and</div>
<div class="t" style="left:2291.60px;top:738.8px;font-size:32.90px;line-height:46px;color:#1f2937;letter-spacing:-0.136px">payment. Since this is well above the 10-</div>
<div class="t" style="left:2291.60px;top:785.7px;font-size:32.90px;line-height:46px;color:#1f2937;letter-spacing:0.103px">payment threshold, it is included in the</div>
<div class="t" style="left:2291.60px;top:832.6px;font-size:32.90px;line-height:46px;color:#1f2937;letter-spacing:0.308px">debt-to-income (DTI) calculation.</div>
<div class="t" style="left:2291.60px;top:879.4px;font-size:32.90px;line-height:46px;color:#1f2937;letter-spacing:-0.152px"><b>Revolving Debt</b>: Both credit cards are</div>
<div class="t" style="left:2291.60px;top:926.3px;font-size:32.90px;line-height:46px;color:#1f2937;letter-spacing:0.004px">calculated using the minimum monthly</div>
<div class="t" style="left:2291.60px;top:973.2px;font-size:32.90px;line-height:46px;color:#1f2937;letter-spacing:0.155px">payments listed on the latest report.</div>
<div class="t" style="left:2291.60px;top:1020.0px;font-size:32.90px;line-height:46px;color:#1f2937;letter-spacing:-0.096px"><b>Guideline Confirmation</b>: For this profile,</div>
<div class="t" style="left:2291.60px;top:1066.9px;font-size:32.90px;line-height:46px;color:#1f2937;letter-spacing:-0.102px">FHA and Conventional treatments yield</div>
<div class="t" style="left:2291.60px;top:1113.8px;font-size:32.90px;line-height:46px;color:#1f2937;letter-spacing:-0.109px">the same results as there are no student</div>
<div class="t" style="left:2291.60px;top:1160.6px;font-size:32.90px;line-height:46px;color:#1f2937;letter-spacing:0.093px">loans or installment debts with fewer than</div>
<div class="t" style="left:2291.60px;top:1207.5px;font-size:32.90px;line-height:46px;color:#1f2937;letter-spacing:-0.194px">10 payments.</div>
<div class="a" style="left:2265.0px;top:618.5px;width:9.6px;height:9.6px;border-radius:50%;background:#1f2937"></div>
<div class="a" style="left:2265.0px;top:899.7px;width:9.6px;height:9.6px;border-radius:50%;background:#1f2937"></div>
<div class="a" style="left:2265.0px;top:1040.3px;width:9.6px;height:9.6px;border-radius:50%;background:#1f2937"></div>
<div class="t" style="left:2235.80px;top:1285.0px;font-size:32.90px;line-height:46px;color:#1f2937;letter-spacing:0.106px">The document now explicitly attributes these</div>
<div class="t" style="left:2235.80px;top:1331.9px;font-size:32.90px;line-height:46px;color:#1f2937;letter-spacing:-0.054px">calculations to Conventional guidelines in the</div>
<div class="t" style="left:2235.80px;top:1378.2px;font-size:32.90px;line-height:46px;color:#1f2937;letter-spacing:-0.120px"><b>Credit &amp; Liabilities</b> section.</div>
<svg class="a" style="left:2244.0px;top:1449.0px;" width="34" height="34" viewBox="0 0 34 34" fill="none"><path d="M3 12.500v9h5.500l8 6.500v-22l-8 6.500z" stroke="#5b6b7d" stroke-width="2.300" stroke-linecap="round" stroke-linejoin="round"/><path d="M21.500 12a7 7 0 0 1 0 10M25.500 7.500a13 13 0 0 1 0 19" stroke="#5b6b7d" stroke-width="2.300" stroke-linecap="round" stroke-linejoin="round"/></svg>
<svg class="a" style="left:2308.0px;top:1450.0px;" width="32" height="32" viewBox="0 0 32 32" fill="none"><path d="M4 3.500L28 16 4 28.500z" stroke="#5b6b7d" stroke-width="2.300" stroke-linecap="round" stroke-linejoin="round"/></svg>
<svg class="a" style="left:2371.0px;top:1450.0px;" width="32" height="32" viewBox="0 0 32 32" fill="none"><path d="M3 3.500v9h9" stroke="#5b6b7d" stroke-width="2.300" stroke-linecap="round" stroke-linejoin="round"/><path d="M4.500 12A10 10 0 1 1 22 22l-9 8" stroke="#5b6b7d" stroke-width="2.300" stroke-linecap="round" stroke-linejoin="round"/></svg>
<svg class="a" style="left:2429.0px;top:1448.0px;" width="38" height="36" viewBox="0 0 38 36" fill="none"><path d="M3 16.500h6.500v16H3z" stroke="#5b6b7d" stroke-width="2.300" stroke-linecap="round" stroke-linejoin="round"/><path d="M9.500 17.500l6-13.500c3 0 4.500 2 4.500 4.500v6.500h10c2.500 0 4 2 3.500 4.500l-2 9.500c-.5 2-2 3.500-4 3.500H9.500" stroke="#5b6b7d" stroke-width="2.300" stroke-linecap="round" stroke-linejoin="round"/></svg>
<svg class="a" style="left:2491.0px;top:1449.0px;" width="38" height="36" viewBox="0 0 38 36" fill="none"><path d="M35 19.500h-6.500v-16H35z" stroke="#5b6b7d" stroke-width="2.300" stroke-linecap="round" stroke-linejoin="round"/><path d="M28.500 18.500l-6 13.500c-3 0-4.500-2-4.500-4.500v-6.500H8c-2.500 0-4-2-3.500-4.500l2-9.500c.5-2 2-3.500 4-3.500h18" stroke="#5b6b7d" stroke-width="2.300" stroke-linecap="round" stroke-linejoin="round"/></svg>
<div class="t " style="left:2783.95px;top:1450.7px;font-size:26.60px;line-height:35px;color:#5a6a7d;letter-spacing:0.914px;">Auto • 0x</div>
<div class="a" style="left:2224.6px;top:1526.0px;width:684.8px;height:281.5px;background:#f8f9fb;border:2px solid #e1e5eb;border-radius:0 0 30px 30px;box-shadow:0 -2px 6px rgba(120,135,160,.10)"></div>
<div class="a" style="left:2241.6px;top:1542.7px;width:56.0px;height:46.5px;border:1.600px solid #d6dadf;border-radius:9px;background:#f8f9fb"></div>
<svg class="a" style="left:2256.0px;top:1551.0px;" width="28" height="30" viewBox="0 0 28 30" fill="none"><path d="M21.500 12.500l-9.500 9.500a3.200 3.200 0 0 1-4.500-4.500L18 7a5.200 5.200 0 0 1 7.400 7.400L14 25.800" stroke="#5b6b7d" stroke-width="2.200" stroke-linecap="round" stroke-linejoin="round" transform="rotate(8 14 15) translate(-2 -1)"/></svg>
<svg class="a" style="left:2846.0px;top:1545.0px;" width="40" height="40" viewBox="0 0 40 40" fill="none"><circle cx="20" cy="20" r="17.500" stroke="#c3cad5" stroke-width="2"/><path d="M20 20L19.600 2.500A17.500 17.500 0 0 1 25 3.200z" fill="#8391a6"/></svg>
<svg class="a" style="left:2254.0px;top:1613.0px;" width="32" height="26" viewBox="0 0 32 26" fill="none"><path d="M2.500 15C6 7.500 11 4.500 16 4.500S26 7.500 29.500 15" stroke="#c5ccd6" stroke-width="2.300" stroke-linecap="round"/><circle cx="16" cy="15.500" r="5" stroke="#c5ccd6" stroke-width="2.300"/></svg>
<div class="t " style="left:2298.89px;top:1608.5px;font-size:27.90px;line-height:36px;color:#8d9bb0;letter-spacing:0.449px;">Viewing</div>
<svg class="a" style="left:2412.0px;top:1612.0px;" width="23.5" height="28" viewBox="0 0 26.5 31.5" fill="none"><path d="M4.500 0H17L26.500 9.500V27a4.500 4.500 0 0 1-4.500 4.500H4.500a4.500 4.500 0 0 1-4.500-4.500V4.500a4.500 4.500 0 0 1 4.500-4.500z" fill="#2d5aa6"/><path d="M14.600 2.600V10a1 1 0 0 0 1 1H23z" fill="#e6eefa"/><path d="M4.200 15.500h3.600l1.800 7.500 2.200-7.500h3l2.200 7.500 1.800-7.500h3.600l-3.600 12.500h-3.400l-2.100-7-2.100 7H7.800z" fill="#fff"/></svg>
<div class="a" style="left:2458.3px;top:1608.5px;width:377.2px;height:36px;overflow:hidden;-webkit-mask-image:linear-gradient(90deg,#000 97%,transparent 100%);mask-image:linear-gradient(90deg,#000 97%,transparent 100%)"><div class="t" style="left:1.71px;top:0;font-size:27.90px;line-height:36px;color:#5b6b7d;letter-spacing:0.062px">Borrower_Profile_John_Borrower.docx</div></div>
<div class="t " style="left:2240.88px;top:1673.0px;font-size:31.90px;line-height:44px;color:#8d9bb0;letter-spacing:0.156px;">Reference, analyze, make decisions on anyt</div>
<div class="t " style="left:2255.94px;top:1747.0px;font-size:27.90px;line-height:36px;color:#1f2937;letter-spacing:-0.064px;">Auto</div>
<svg class="a" style="left:2323.0px;top:1758.0px;" width="22" height="14" viewBox="0 0 22 14" fill="none"><path d="M2.500 2.500L11 11l8.500-8.500" stroke="#1f2937" stroke-width="2.200" stroke-linecap="round" stroke-linejoin="round"/></svg>
<svg class="a" style="left:2790.5px;top:1747.0px;" width="26" height="36" viewBox="0 0 32 44" fill="none"><rect x="9" y="2.500" width="14" height="24" rx="7" stroke="#1f2937" stroke-width="2.600"/><path d="M3.500 20a12.500 12.500 0 0 0 25 0M16 32.500V40" stroke="#1f2937" stroke-width="2.600" stroke-linecap="round"/></svg>
<svg class="a" style="left:2846.0px;top:1748.0px;" width="40" height="36" viewBox="0 0 40 36" fill="none"><path d="M3 3.500L37 18 3 32.500 8 18z" stroke="#8d9bb0" stroke-width="2.300" stroke-linejoin="round"/><path d="M8 18H22" stroke="#8d9bb0" stroke-width="2.300" stroke-linecap="round"/></svg>
</body></html>
